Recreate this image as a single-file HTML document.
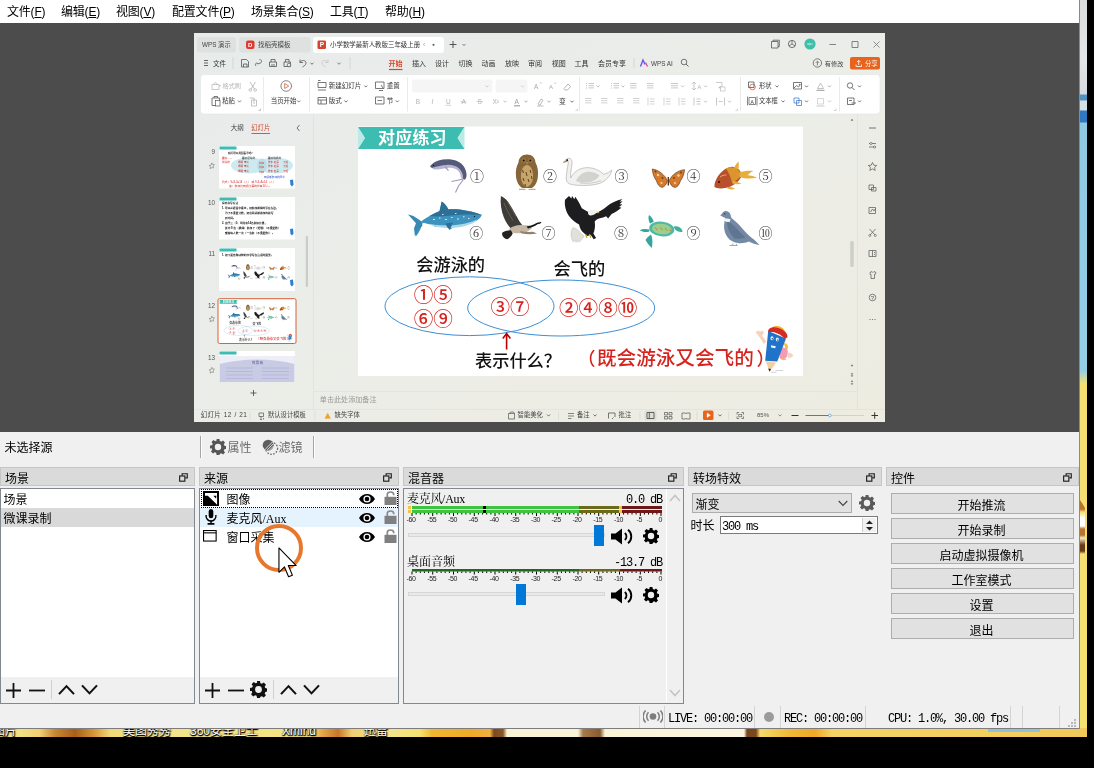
<!DOCTYPE html>
<html lang="zh-CN">
<head>
<meta charset="utf-8">
<title>OBS</title>
<style>
*{box-sizing:border-box;margin:0;padding:0}
html,body{width:1094px;height:768px;overflow:hidden;background:#000}
body{position:relative;font-family:"Liberation Sans","Noto Sans CJK SC",sans-serif;font-size:12px;color:#000;line-height:1}
.abs{position:absolute}
.wl{top:723.5px;font-size:12px;line-height:14px;color:#fff;white-space:nowrap;text-shadow:1px 1px 1px #000,0 0 2px #000,0 1px 1px #000}
#wall{position:absolute;left:0;top:0;width:1087px;height:737px;background:#f3da6e;overflow:hidden}
#obs{position:absolute;left:0;top:0;width:1080px;height:729px;background:#f0f0f0;overflow:hidden;will-change:transform}
#menubar{position:absolute;left:0;top:0;width:1079px;height:23px;background:#fff}
#menubar span{position:absolute;top:5px;font-size:12px;line-height:14px;white-space:nowrap;letter-spacing:-0.2px}
#menubar u{text-decoration:underline;text-underline-offset:1px}
#preview{position:absolute;left:0;top:23px;width:1079px;height:409px;background:#4c4c4c}
.dock-title{position:absolute;top:467px;height:19px;background:#dbdada;border:1px solid #c6c6c6;font-size:12px;line-height:16px;padding-left:4px;padding-top:2.5px}
.dock-title i{position:absolute;right:6px;top:4px;width:9px;height:9px}
.list{position:absolute;top:488px;height:215.5px;background:#fff;border:1px solid #828790}
.sans{font-family:"Liberation Sans","Noto Sans CJK SC",sans-serif}
.serif{font-family:"Liberation Serif","Noto Serif CJK SC",serif}
.mono{font-family:"Liberation Mono",monospace;font-size:12px;line-height:14px;letter-spacing:-1.2px;white-space:pre}
.btn{position:absolute;left:891px;width:183px;height:21px;background:#e1e1e1;border:1px solid #adadad;text-align:center;font-size:12px;line-height:19px;padding-top:2.5px;padding-right:2px}
</style>
</head>
<body>
<div id="wall">
  <div class="abs" style="left:1079px;top:0;width:8px;height:737px;background:linear-gradient(180deg,#d9dde0 0,#e3e6e6 60px,#d5dade 94px,#4f93c4 95px,#4f93c4 100px,#d3dfe3 101px,#d3dfe3 110px,#2f79c2 111px,#2f79c2 122px,#8fc9e3 123px,#93cde6 370px,#f5e172 384px,#f5e070 737px)"></div>
  <div class="abs" style="left:1079px;top:498px;width:6px;height:56px;background:linear-gradient(180deg,#f5e070 0,#b9742c 4px,#b9742c 11px,#f5e070 14px,#fff 20px,#fff 28px,#b9742c 31px,#b9742c 37px,#f6ecc0 40px,#6a3a18 47px,#6a3a18 53px,#f5e070 56px);clip-path:polygon(0 0,100% 10px,100% 100%,0 100%)"></div>
  <div class="abs" style="left:0;top:728px;width:1087px;height:9px;background:linear-gradient(90deg,#f3df84 0,#f3df84 20px,#f1cf72 40px,#c98632 55px,#a85e1c 75px,#d89a3c 95px,#f2d878 110px,#f5e58a 180px,#f5e380 310px,#e7a848 322px,#c9762a 338px,#f0d070 352px,#f5e58a 392px,#f5e070 420px,#f2b632 432px,#f0aa28 470px,#f0b040 490px,#7a4a20 494px,#8a5626 503px,#faf3d6 507px,#faf3d6 578px,#a87a4a 583px,#8a5a30 600px,#faf3d6 605px,#fbf6e0 744px,#7a461c 747px,#7a461c 756px,#f5da6a 760px,#f2b838 790px,#f0a828 815px,#f4d465 832px,#f3cf60 985px,#f2c85a 1087px)"></div>
  <div class="abs" style="left:988px;top:729px;width:52px;height:3px;background:#8fc0dc"></div>
  <div class="abs wl" style="left:-7px">图片</div>
  <div class="abs wl" style="left:123px">美图秀秀</div>
  <div class="abs wl" style="left:190px">360安全卫士</div>
  <div class="abs wl" style="left:282px">Xmind</div>
  <div class="abs wl" style="left:364px">迅雷</div>
</div>
<div id="obs">
  <div id="menubar">
    <span style="left:7px">文件(<u>F</u>)</span>
    <span style="left:61px">编辑(<u>E</u>)</span>
    <span style="left:116px">视图(<u>V</u>)</span>
    <span style="left:172px">配置文件(<u>P</u>)</span>
    <span style="left:251px">场景集合(<u>S</u>)</span>
    <span style="left:330px">工具(<u>T</u>)</span>
    <span style="left:385px">帮助(<u>H</u>)</span>
  </div>
  <div id="preview"></div>
  <svg class="abs" style="left:0;top:0;filter:blur(.5px)" width="1079" height="728" viewBox="0 0 1079 728" font-family="Liberation Sans, Noto Sans CJK SC, sans-serif">
<defs><linearGradient id="wbg" x1="0" y1="0" x2="1" y2="1"><stop offset="0" stop-color="#e7ebeb"/><stop offset="0.5" stop-color="#ebede8"/><stop offset="1" stop-color="#eeece1"/></linearGradient><clipPath id="cthumb"><rect x="194" y="120" width="119" height="262"/></clipPath></defs>
<rect x="194" y="33" width="691" height="389" fill="url(#wbg)" rx="0" />
<rect x="197" y="37" width="39" height="15.5" fill="#dde1df" rx="3" />
<text x="202" y="47.3" font-size="6.3" fill="#444" text-anchor="start" font-weight="normal" >WPS 演示</text>
<rect x="239" y="37" width="71.5" height="15.5" fill="#dde1df" rx="3" />
<rect x="246" y="40.5" width="8.5" height="8.5" fill="#e03a2e" rx="2" />
<text x="250.2" y="47.2" font-size="6" fill="#fff" text-anchor="middle" font-weight="bold" >D</text>
<text x="258" y="47.3" font-size="6.5" fill="#444" text-anchor="start" font-weight="normal" >找稻壳模板</text>
<rect x="313" y="37" width="131" height="16" fill="#ffffff" rx="3" />
<rect x="317.5" y="40.5" width="8.5" height="8.5" fill="#d8432e" rx="1.2" />
<text x="321.8" y="47.3" font-size="6.5" fill="#fff" text-anchor="middle" font-weight="bold" >P</text>
<text x="330" y="47.4" font-size="6.45" fill="#333" text-anchor="start" font-weight="normal" >小学数学最新人教版三年级上册</text>
<text x="423" y="47.3" font-size="6.5" fill="#999" text-anchor="start" font-weight="normal" >‹</text>
<circle cx="433.5" cy="44.8" r="1.1" fill="#666"/>
<path d="M449.5 44.5h7M453 41v7" stroke="#444" stroke-width="0.9" fill="none" />
<path d="M462.5 44L464 45.599999999999994L465.5 44" stroke="#666" stroke-width="0.8" fill="none"/>
<path d="M771.5 41.5h6.5v6.5h-6.5zM773 41.5v-1.3h6.3v6.3h-1.3" stroke="#555" stroke-width="0.8" fill="none" />
<circle cx="792" cy="44" r="3.6" fill="none" stroke="#555" stroke-width="0.8"/>
<path d="M792 40.5v3.5l-3 1.8M792 44l3 1.8" stroke="#555" stroke-width="0.7" fill="none" />
<circle cx="810" cy="44" r="5.6" fill="#3dbfa8"/>
<text x="810" y="45.2" font-size="3" fill="#e8fff8" text-anchor="middle" font-weight="normal" >wps</text>
<path d="M829.5 44.5L836 44.5" stroke="#666" stroke-width="0.8" fill="none" />
<path d="M852 41.5h6v6h-6z" stroke="#666" stroke-width="0.8" fill="none" />
<path d="M873.5 41.5l6 6M879.5 41.5l-6 6" stroke="#777" stroke-width="0.8" fill="none" />
<path d="M204 60.5h4M204 63h4M204 65.5h4" stroke="#444" stroke-width="0.8" fill="none" />
<text x="213" y="65.5" font-size="6.5" fill="#333" text-anchor="start" font-weight="normal" >文件</text>
<path d="M233 57L233 69" stroke="#cfd3d0" stroke-width="0.8" fill="none" />
<path d="M241.5 59.5h5l2 2v5.5h-7zM243.5 67v-3h3.5v3" stroke="#555" stroke-width="0.8" fill="none" />
<path d="M256 66c-1.5-2 0-3.5 2-2.5M259.5 59.5c2 0 3 2.5 1 3.5l-3 1" stroke="#555" stroke-width="0.8" fill="none" />
<path d="M269.5 62h7v4.5h-7zM271 62v-2.5h4v2.5M271 65h4" stroke="#555" stroke-width="0.8" fill="none" />
<path d="M284 62h6.5v4.5H284zM285.5 62v-2.5h3.5v2.5" stroke="#555" stroke-width="0.8" fill="none" />
<circle cx="289" cy="65" r="1.8" fill="#e8ecea" stroke="#555" stroke-width="0.7"/>
<path d="M300 62.5c1.5-3 6-2.5 6 .5 0 2-2 3-3.5 4M300 59.5v3h3" stroke="#555" stroke-width="0.8" fill="none" />
<path d="M310.5 62.7L312 64.3L313.5 62.7" stroke="#555" stroke-width="0.8" fill="none"/>
<path d="M328 62.5c-1.5-3-6-2.5-6 .5 0 2 2 3 3.5 4M328 59.5v3h-3" stroke="#c4c8c5" stroke-width="0.8" fill="none" />
<path d="M337.5 62.7L339 64.3L340.5 62.7" stroke="#666" stroke-width="0.8" fill="none"/>
<path d="M350 57L350 69" stroke="#cfd3d0" stroke-width="0.8" fill="none" />
<text x="388.5" y="65.8" font-size="7" fill="#d5482a" text-anchor="start" font-weight="bold" >开始</text>
<text x="412" y="65.8" font-size="7" fill="#333" text-anchor="start" font-weight="normal" >插入</text>
<text x="435" y="65.8" font-size="7" fill="#333" text-anchor="start" font-weight="normal" >设计</text>
<text x="458.5" y="65.8" font-size="7" fill="#333" text-anchor="start" font-weight="normal" >切换</text>
<text x="481.5" y="65.8" font-size="7" fill="#333" text-anchor="start" font-weight="normal" >动画</text>
<text x="505" y="65.8" font-size="7" fill="#333" text-anchor="start" font-weight="normal" >放映</text>
<text x="528" y="65.8" font-size="7" fill="#333" text-anchor="start" font-weight="normal" >审阅</text>
<text x="551.8" y="65.8" font-size="7" fill="#333" text-anchor="start" font-weight="normal" >视图</text>
<text x="574.5" y="65.8" font-size="7" fill="#333" text-anchor="start" font-weight="normal" >工具</text>
<text x="598" y="65.8" font-size="7" fill="#333" text-anchor="start" font-weight="normal" >会员专享</text>
<path d="M389 69.5L402.5 69.5" stroke="#d5482a" stroke-width="1.2" fill="none" />
<path d="M634 58L634 68" stroke="#cfd3d0" stroke-width="0.8" fill="none" />
<path d="M640.5 66.5l2.5-6.5 2 4.5" stroke="#6a4de8" stroke-width="1.3" fill="none" />
<path d="M645.5 62.5l2 4" stroke="#e8408a" stroke-width="1.3" fill="none" />
<text x="651" y="65.6" font-size="6.3" fill="#444" text-anchor="start" font-weight="normal" >WPS AI</text>
<circle cx="684" cy="62" r="2.8" fill="none" stroke="#555" stroke-width="0.8"/>
<path d="M686 64L688.5 66.5" stroke="#555" stroke-width="0.9" fill="none" />
<circle cx="817.4" cy="63" r="4.2" fill="none" stroke="#555" stroke-width="0.75"/>
<path d="M817.4 65.5v-4M815.8 62.8l1.6-1.6 1.6 1.6" stroke="#555" stroke-width="0.7" fill="none" />
<text x="824.8" y="65.5" font-size="6.2" fill="#444" text-anchor="start" font-weight="normal" >有修改</text>
<rect x="850" y="57" width="30" height="12.5" fill="#e8631c" rx="2" />
<path d="M856 64.5v2h5.5v-2M858.7 65v-4.5M857 62l1.7-1.7 1.7 1.7" stroke="#fff" stroke-width="0.8" fill="none" />
<text x="865" y="65.6" font-size="6.3" fill="#fff" text-anchor="start" font-weight="normal" >分享</text>
<rect x="200.5" y="74.5" width="679.5" height="39.5" fill="#ffffff" rx="3.5" stroke="#e1e4e1" stroke-width="0.6"/>
<path d="M212 84.5h7v5h-7zM214 84.5c0-2.5 3-2.5 3 0M219 86.5l2-1.5" stroke="#b9bdb9" stroke-width="0.8" fill="none" />
<text x="222.5" y="88.4" font-size="6.2" fill="#b4b8b4" text-anchor="start" font-weight="normal" >格式刷</text>
<path d="M250 82l4.5 7M255.5 82l-4.5 7" stroke="#a9ada9" stroke-width="0.8" fill="none" />
<circle cx="250.3" cy="90" r="1.3" fill="none" stroke="#a9ada9" stroke-width="0.7"/><circle cx="255.2" cy="90" r="1.3" fill="none" stroke="#a9ada9" stroke-width="0.7"/>
<path d="M212 98h7.5v7.5H212zM214 98v-1.5h3.5v1.5" stroke="#555" stroke-width="0.8" fill="none" />
<rect x="215.5" y="100.5" width="4.5" height="5.5" fill="#fff" rx="0" stroke="#555" stroke-width="0.7"/>
<text x="222.3" y="103.4" font-size="6.3" fill="#333" text-anchor="start" font-weight="normal" >粘贴</text>
<path d="M238 100.5L239.5 102.1L241 100.5" stroke="#555" stroke-width="0.8" fill="none"/>
<path d="M249.5 98h4.5v6M251.5 100h5v6h-5z" stroke="#b0b4b0" stroke-width="0.8" fill="none" />
<path d="M258.5 110.5h2v-2" stroke="#999" stroke-width="0.6" fill="none" />
<path d="M263.5 77L263.5 111.5" stroke="#e3e6e3" stroke-width="0.8" fill="none" />
<circle cx="286.2" cy="86" r="5.3" fill="none" stroke="#666" stroke-width="0.8"/>
<path d="M284.7 83.5v5l4-2.5z" stroke="#d5603a" stroke-width="0.8" fill="none" />
<text x="270.8" y="103.4" font-size="6.4" fill="#333" text-anchor="start" font-weight="normal" >当页开始</text>
<path d="M297.2 100.5L298.7 102.1L300.2 100.5" stroke="#555" stroke-width="0.8" fill="none"/>
<path d="M309.5 77L309.5 111.5" stroke="#e3e6e3" stroke-width="0.8" fill="none" />
<path d="M318 82.5h8v5h-8zM318 90h8M318 80.5h2.5" stroke="#555" stroke-width="0.8" fill="none" />
<text x="328.7" y="88.4" font-size="6.5" fill="#333" text-anchor="start" font-weight="normal" >新建幻灯片</text>
<path d="M364.3 85.5L365.8 87.1L367.3 85.5" stroke="#555" stroke-width="0.8" fill="none"/>
<path d="M318 97.5h8.5v6.5H318zM318 100h8.5M321 100v4" stroke="#555" stroke-width="0.8" fill="none" />
<text x="328.7" y="103.4" font-size="6.5" fill="#333" text-anchor="start" font-weight="normal" >版式</text>
<path d="M344.5 100.5L346 102.1L347.5 100.5" stroke="#555" stroke-width="0.8" fill="none"/>
<path d="M375.5 82h8.5v6.5h-8.5zM379 90.5h4M381 85l2 3" stroke="#555" stroke-width="0.8" fill="none" />
<text x="386.8" y="88.4" font-size="6.5" fill="#333" text-anchor="start" font-weight="normal" >重置</text>
<path d="M375.5 97h8.5v7h-8.5zM377.5 100.5h4.5" stroke="#555" stroke-width="0.8" fill="none" />
<text x="386.8" y="103.4" font-size="6.5" fill="#333" text-anchor="start" font-weight="normal" >节</text>
<path d="M395.8 100.5L397.3 102.1L398.8 100.5" stroke="#555" stroke-width="0.8" fill="none"/>
<path d="M407.5 77L407.5 111.5" stroke="#e3e6e3" stroke-width="0.8" fill="none" />
<rect x="412" y="79.5" width="80.5" height="13" fill="#f4f5f4" rx="2" />
<rect x="495.5" y="79.5" width="32" height="13" fill="#f4f5f4" rx="2" />
<path d="M485.5 85.5L487 87.1L488.5 85.5" stroke="#c5c8c5" stroke-width="0.8" fill="none"/>
<path d="M521 85.5L522.5 87.1L524 85.5" stroke="#c5c8c5" stroke-width="0.8" fill="none"/>
<text x="534" y="88.5" font-size="6.5" fill="#aaa" text-anchor="start" font-weight="normal" >A</text>
<path d="M539.5 83.5l1.2-1.2 1.2 1.2" stroke="#aaa" stroke-width="0.6" fill="none" />
<text x="549" y="88.5" font-size="6" fill="#aaa" text-anchor="start" font-weight="normal" >A</text>
<path d="M554 82.5l1.2 1.2 1.2-1.2" stroke="#aaa" stroke-width="0.6" fill="none" />
<path d="M564 88.5l4-4.5 2.5 2.5-3 3.5h-2.5z" stroke="#999" stroke-width="0.7" fill="none" />
<text x="415.8" y="104" font-size="6.5" fill="#b0b3b0" text-anchor="start" font-weight="normal" >B</text>
<text x="431.5" y="104" font-size="6.5" fill="#b0b3b0" text-anchor="start" font-weight="normal" font-style="italic">I</text>
<text x="446" y="104" font-size="6.5" fill="#b0b3b0" text-anchor="start" font-weight="normal" >U</text>
<text x="461.5" y="104" font-size="6.5" fill="#b0b3b0" text-anchor="start" font-weight="normal" >A</text>
<text x="477.5" y="104" font-size="6.5" fill="#b0b3b0" text-anchor="start" font-weight="normal" >S</text>
<text x="492.5" y="104" font-size="6.5" fill="#b0b3b0" text-anchor="start" font-weight="normal" >X²</text>
<path d="M445.5 105.3L451 105.3" stroke="#b0b3b0" stroke-width="0.6" fill="none" />
<path d="M460.5 101.8L466.5 101.8" stroke="#b0b3b0" stroke-width="0.6" fill="none" />
<path d="M476.5 101.5L483 101.5" stroke="#b0b3b0" stroke-width="0.6" fill="none" />
<path d="M503.5 100.7L505 102.3L506.5 100.7" stroke="#b0b3b0" stroke-width="0.8" fill="none"/>
<text x="514.5" y="103.8" font-size="6.5" fill="#999" text-anchor="start" font-weight="normal" >A</text>
<path d="M514 105.8L520 105.8" stroke="#999" stroke-width="1.1" fill="none" />
<path d="M524.5 100.7L526 102.3L527.5 100.7" stroke="#999" stroke-width="0.8" fill="none"/>
<path d="M538 104l3-5 2 1.2-3 5zM537 106h6.5" stroke="#aaa" stroke-width="0.8" fill="none" />
<path d="M547.5 100.7L549 102.3L550.5 100.7" stroke="#999" stroke-width="0.8" fill="none"/>
<text x="559" y="104.2" font-size="6.8" fill="#333" text-anchor="start" font-weight="normal" >变</text>
<path d="M570.5 100.7L572 102.3L573.5 100.7" stroke="#555" stroke-width="0.8" fill="none"/>
<path d="M579.5 77L579.5 111.5" stroke="#e3e6e3" stroke-width="0.8" fill="none" />
<path d="M588.5 83.5L594 83.5" stroke="#b0b3b0" stroke-width="0.7" fill="none" />
<path d="M588.5 85.7L594 85.7" stroke="#b0b3b0" stroke-width="0.7" fill="none" />
<path d="M588.5 87.9L594 87.9" stroke="#b0b3b0" stroke-width="0.7" fill="none" />
<circle cx="586.5" cy="83.5" r="0.5" fill="#b0b3b0"/>
<circle cx="586.5" cy="85.7" r="0.5" fill="#b0b3b0"/>
<circle cx="586.5" cy="87.9" r="0.5" fill="#b0b3b0"/>
<path d="M596.5 85.5L598 87.1L599.5 85.5" stroke="#b0b3b0" stroke-width="0.8" fill="none"/>
<path d="M613.5 83.5L619 83.5" stroke="#b0b3b0" stroke-width="0.7" fill="none" />
<path d="M613.5 85.7L619 85.7" stroke="#b0b3b0" stroke-width="0.7" fill="none" />
<path d="M613.5 87.9L619 87.9" stroke="#b0b3b0" stroke-width="0.7" fill="none" />
<circle cx="611.5" cy="83.5" r="0.5" fill="#b0b3b0"/>
<circle cx="611.5" cy="85.7" r="0.5" fill="#b0b3b0"/>
<circle cx="611.5" cy="87.9" r="0.5" fill="#b0b3b0"/>
<path d="M621.5 85.5L623 87.1L624.5 85.5" stroke="#b0b3b0" stroke-width="0.8" fill="none"/>
<path d="M630 83.5L636.5 83.5" stroke="#b5b8b5" stroke-width="0.7" fill="none" />
<path d="M630 85.7L636.5 85.7" stroke="#b5b8b5" stroke-width="0.7" fill="none" />
<path d="M630 87.9L636.5 87.9" stroke="#b5b8b5" stroke-width="0.7" fill="none" />
<path d="M647 83.5L653.5 83.5" stroke="#b5b8b5" stroke-width="0.7" fill="none" />
<path d="M647 85.7L653.5 85.7" stroke="#b5b8b5" stroke-width="0.7" fill="none" />
<path d="M647 87.9L653.5 87.9" stroke="#b5b8b5" stroke-width="0.7" fill="none" />
<path d="M671 83.5L678 83.5" stroke="#b0b3b0" stroke-width="0.7" fill="none" />
<path d="M671 85.7L678 85.7" stroke="#b0b3b0" stroke-width="0.7" fill="none" />
<path d="M671 87.9L678 87.9" stroke="#b0b3b0" stroke-width="0.7" fill="none" />
<path d="M681 85.5L682.5 87.1L684 85.5" stroke="#b0b3b0" stroke-width="0.8" fill="none"/>
<path d="M694 82v8M692 88l2 2 2-2M692 84l2-2 2 2" stroke="#b0b3b0" stroke-width="0.7" fill="none" />
<text x="697.5" y="88.5" font-size="5.5" fill="#b0b3b0" text-anchor="start" font-weight="normal" >A</text>
<path d="M704 85.5L705.5 87.1L707 85.5" stroke="#b0b3b0" stroke-width="0.8" fill="none"/>
<path d="M716 82.5h6v5h-3.5M721 89l-2-1.5 2-1.5" stroke="#b5b8b5" stroke-width="0.7" fill="none" />
<rect x="720.5" y="87" width="4.5" height="4" fill="#fff" rx="0" stroke="#b5b8b5" stroke-width="0.6"/>
<path d="M585 98.5L591.5 98.5" stroke="#bfc2bf" stroke-width="0.7" fill="none" />
<path d="M585 100.7L591.5 100.7" stroke="#bfc2bf" stroke-width="0.7" fill="none" />
<path d="M585 102.9L591.5 102.9" stroke="#bfc2bf" stroke-width="0.7" fill="none" />
<path d="M601 98.5L607.5 98.5" stroke="#bfc2bf" stroke-width="0.7" fill="none" />
<path d="M601 100.7L607.5 100.7" stroke="#bfc2bf" stroke-width="0.7" fill="none" />
<path d="M601 102.9L607.5 102.9" stroke="#bfc2bf" stroke-width="0.7" fill="none" />
<path d="M617 98.5L623.5 98.5" stroke="#bfc2bf" stroke-width="0.7" fill="none" />
<path d="M617 100.7L623.5 100.7" stroke="#bfc2bf" stroke-width="0.7" fill="none" />
<path d="M617 102.9L623.5 102.9" stroke="#bfc2bf" stroke-width="0.7" fill="none" />
<path d="M633 98.5L639.5 98.5" stroke="#bfc2bf" stroke-width="0.7" fill="none" />
<path d="M633 100.7L639.5 100.7" stroke="#bfc2bf" stroke-width="0.7" fill="none" />
<path d="M633 102.9L639.5 102.9" stroke="#bfc2bf" stroke-width="0.7" fill="none" />
<path d="M648 97.5v8M650 99h4.5M650 101.5h4.5M650 104h4.5" stroke="#bfc2bf" stroke-width="0.7" fill="none" />
<path d="M664 97.5v8M666 99h4.5M666 101.5h4.5M666 104h4.5" stroke="#bfc2bf" stroke-width="0.7" fill="none" />
<path d="M679 97.5v8M681 99h4.5M681 101.5h4.5M681 104h4.5" stroke="#bfc2bf" stroke-width="0.7" fill="none" />
<path d="M694 97.5v8M696.5 99h4M696.5 101.5h4M696.5 104h4" stroke="#b0b3b0" stroke-width="0.7" fill="none" />
<path d="M704 100.7L705.5 102.3L707 100.7" stroke="#b0b3b0" stroke-width="0.8" fill="none"/>
<path d="M716.5 97.5v8M724.5 97.5v8M718.5 101.5h4" stroke="#b0b3b0" stroke-width="0.7" fill="none" />
<path d="M728 100.7L729.5 102.3L731 100.7" stroke="#b0b3b0" stroke-width="0.8" fill="none"/>
<path d="M575.5 110.5h2v-2" stroke="#aaa" stroke-width="0.5" fill="none" />
<path d="M735.5 110.5h2v-2" stroke="#aaa" stroke-width="0.5" fill="none" />
<path d="M740.5 77L740.5 111.5" stroke="#e3e6e3" stroke-width="0.8" fill="none" />
<circle cx="752.5" cy="87" r="2.8" fill="none" stroke="#d5603a" stroke-width="0.8"/>
<path d="M748.5 82h5.5v5.5h-5.5z" stroke="#555" stroke-width="0.8" fill="none" />
<text x="759" y="88.4" font-size="6.3" fill="#333" text-anchor="start" font-weight="normal" >形状</text>
<path d="M775.5 85.5L777 87.1L778.5 85.5" stroke="#555" stroke-width="0.8" fill="none"/>
<path d="M749 97.5h6.5v7H749zM747.5 96.5v9M757 96.5v9" stroke="#555" stroke-width="0.7" fill="none" />
<text x="750.5" y="103.5" font-size="5" fill="#333" text-anchor="start" font-weight="normal" >A</text>
<text x="759" y="103.4" font-size="6.3" fill="#333" text-anchor="start" font-weight="normal" >文本框</text>
<path d="M781.5 100.5L783 102.1L784.5 100.5" stroke="#555" stroke-width="0.8" fill="none"/>
<path d="M793.5 82.5h8v6.5h-8zM794 88l2.5-2.5 2 1.5 2-2.5" stroke="#555" stroke-width="0.8" fill="none" />
<circle cx="799.5" cy="84.5" r="0.8" fill="#d5603a"/>
<path d="M805 85.5L806.5 87.1L808 85.5" stroke="#555" stroke-width="0.8" fill="none"/>
<path d="M794 98h5v5h-5zM796.5 100.5h5v5h-5z" stroke="#4a7fd5" stroke-width="0.8" fill="none" />
<path d="M805 100.5L806.5 102.1L808 100.5" stroke="#555" stroke-width="0.8" fill="none"/>
<path d="M817.5 88.5l3-5.5 3 5.5z" stroke="#aaa" stroke-width="0.7" fill="none" />
<path d="M816.5 90.3L824.5 90.3" stroke="#999" stroke-width="1" fill="none" />
<path d="M828 85.5L829.5 87.1L831 85.5" stroke="#999" stroke-width="0.8" fill="none"/>
<path d="M817.5 98.5h6v5.5h-6z" stroke="#c5c8c5" stroke-width="0.7" fill="none" />
<path d="M816.5 106L824.5 106" stroke="#c5c8c5" stroke-width="1" fill="none" />
<path d="M828 100.5L829.5 102.1L831 100.5" stroke="#bbb" stroke-width="0.8" fill="none"/>
<path d="M834 110.5h2v-2" stroke="#aaa" stroke-width="0.5" fill="none" />
<path d="M839.5 77L839.5 111.5" stroke="#e3e6e3" stroke-width="0.8" fill="none" />
<circle cx="850" cy="85.5" r="2.7" fill="none" stroke="#555" stroke-width="0.8"/>
<path d="M852 87.5L854.5 90" stroke="#555" stroke-width="0.9" fill="none" />
<path d="M858 85.5L859.5 87.1L861 85.5" stroke="#555" stroke-width="0.8" fill="none"/>
<path d="M847.5 98h6.5v6.5h-6.5zM849 100.5h3M851.5 103h4.5" stroke="#555" stroke-width="0.8" fill="none" />
<path d="M858 100.5L859.5 102.1L861 100.5" stroke="#555" stroke-width="0.8" fill="none"/>
<text x="230.8" y="130.4" font-size="6.5" fill="#444" text-anchor="start" font-weight="normal" >大纲</text>
<text x="251.3" y="130.4" font-size="6.3" fill="#d5482a" text-anchor="start" font-weight="normal" >幻灯片</text>
<path d="M251.5 133.5L270 133.5" stroke="#d5482a" stroke-width="0.9" fill="none" />
<path d="M299.5 125l-2.5 3 2.5 3" stroke="#555" stroke-width="0.8" fill="none" />
<path d="M313.5 115L313.5 409" stroke="#dde0dc" stroke-width="0.7" fill="none" />
<rect x="305.8" y="236" width="2.2" height="51" fill="#c9ccc9" rx="1" />
<g clip-path="url(#cthumb)"><g font-size="6.3" fill="#555" text-anchor="end"><text x="215" y="153.5">9</text><text x="215" y="205">10</text><text x="215" y="256">11</text><text x="215" y="308">12</text><text x="215" y="360">13</text></g><path d="M0-2.7l.8 1.7 1.9.2-1.4 1.3.4 1.9L0 2.1l-1.7 1 .4-1.9-1.4-1.3 1.9-.2z" transform="translate(211.8,165.5)" fill="none" stroke="#777" stroke-width=".6"/><path d="M0-2.7l.8 1.7 1.9.2-1.4 1.3.4 1.9L0 2.1l-1.7 1 .4-1.9-1.4-1.3 1.9-.2z" transform="translate(211.8,318.7)" fill="none" stroke="#777" stroke-width=".6"/><path d="M0-2.7l.8 1.7 1.9.2-1.4 1.3.4 1.9L0 2.1l-1.7 1 .4-1.9-1.4-1.3 1.9-.2z" transform="translate(211.8,370)" fill="none" stroke="#777" stroke-width=".6"/><rect x="219" y="146" width="76" height="42.5" fill="#fff"/><rect x="219.5" y="146.5" width="17" height="3" fill="#3dbcb2"/><ellipse cx="249" cy="165.5" rx="18" ry="8" fill="#cdeaf0"/><ellipse cx="275" cy="165.5" rx="18" ry="8" fill="#cdeaf0"/><ellipse cx="262" cy="165.5" rx="5" ry="7" fill="#b9e0e8"/><g font-family="Liberation Sans, Noto Sans CJK SC, sans-serif" font-size="2.6" fill="#d6231e"><text x="228" y="154.3" fill="#222" font-weight="bold">我们可以用图表示吗？</text><text x="222" y="158.6">喜欢……</text><text x="222" y="162.8">篮球的</text><text x="242" y="158.6" fill="#222">喜欢足球的</text><text x="268" y="158.6" fill="#222">喜欢跳绳的</text><text x="238" y="162.5">杨明 李芳</text><text x="259" y="163.5">刘红</text><text x="268" y="162.5">陈东 赵军</text><text x="283" y="162.5">丁旭</text><text x="238" y="167">杨明 李芳</text><text x="259" y="168">刘红</text><text x="268" y="167">陈东 赵军</text><text x="283" y="167">丁旭</text><text x="238" y="171.5">杨明 李芳</text><text x="259" y="172.5">刘红</text><text x="268" y="171.5">陈东 赵军</text><text x="283" y="171.5">丁旭</text><text x="264" y="178" fill="#2a4fd0">两项都参加的同学</text><text x="222" y="182.5" font-size="2.8">列式：9+8-3=14（人） 或 9-3+8=14（人）</text><text x="229" y="186.5" font-size="2.8">答：参加这两项比赛的共有14人。</text></g><path d="M290 180l3-.5.5 5-1.5 2-1.5-1.5z" fill="#2c7fd2"/><rect x="219" y="197" width="76" height="42.5" fill="#fff"/><rect x="219.5" y="197.5" width="17" height="3" fill="#3dbcb2"/><g font-family="Liberation Sans, Noto Sans CJK SC, sans-serif" font-size="2.7" fill="#111" font-weight="bold"><text x="222" y="203.5">探究书写方法</text><text x="222" y="208.6">1. 可以从题目中看出，把参加跳绳的写在左边，</text><text x="225" y="213.7">为了不重复计数，把这两项都参加的就写</text><text x="225" y="218.8">到中间。</text><text x="222" y="223.9">2. 由于三（1）班共有14名参加比赛，</text><text x="225" y="229">其中 9 名（跳绳）参加了（踢毽）（不重复数）</text><text x="225" y="234.1">或者每人数一次（一名参（不重复数））。</text></g><path d="M290 229l3-.5.5 5-1.5 2-1.5-1.5z" fill="#2c7fd2"/><rect x="219" y="248" width="76" height="43" fill="#fff"/><g transform="translate(157.858,237.896) scale(0.1708)"><path d="M430 166.2c2-2.6 5-4.6 8.5-5.8 6-1.6 13-1.6 19 .8 5 2.2 8.5 7 9 13 .2 2.2-.4 4.2-1.6 5.6l-2.4-1.2c.4-4.6-1.4-8.6-5.5-11-3.6-2-8.5-1.8-13-.8-4.5.8-9 1.8-12.6 1z" fill="#555a78"/><path d="M433 167.5c4-1 9-2.4 13.5-2.6 5-.4 9.5.8 12.5 3.6 3 2.8 4.4 6.6 3.8 10.5l-2-1c.2-3.4-1.3-6.4-4.3-8.4-3.4-2.2-8-2-12.5-1.2-4 .8-8 1.6-11.6.6z" fill="#b7b3d3"/><path d="M463.5 179l-12 2.5M463.5 179.5l-5 6.5-3 6.5M445 167l3.5 3.5" stroke="#9a98b8" stroke-width="1.1" fill="none"/><circle cx="433.5" cy="165.4" r=".7" fill="#111"/><path d="M527 154.5c5 0 8.3 3.4 8.5 8 2 3.5 3 8.5 2.4 14-.5 5.5-3 10-6 11.5h-9.5c-3.4-1.8-5.8-6-6.4-11.5-.6-5.5.4-10.5 2.5-14 .2-4.6 3.5-8 8.5-8z" fill="#866538"/><path d="M527 165c3 0 5.5 3.5 6 9.5.4 6-1.6 11-6 12.5-4.4-1.5-6.4-6.5-6-12.5.5-6 3-9.5 6-9.5z" fill="#c7a468"/><path d="M522.5 170l1 3M526 172l1 4M530 170l1 3M523 178l1 3M528 179l1 3M531.5 176l.5 3M525 184l.5 2" stroke="#5e4220" stroke-width="1"/><circle cx="523.7" cy="160.6" r="2.3" fill="#9a7a48"/><circle cx="530.3" cy="160.6" r="2.3" fill="#9a7a48"/><circle cx="523.7" cy="160.6" r="1" fill="#1a1208"/><circle cx="530.3" cy="160.6" r="1" fill="#1a1208"/><path d="M526.3 162.5l.7 1.8.7-1.8z" fill="#d9c48a"/><path d="M519 189.3h6.5M528.5 189.3h7" stroke="#c9ae78" stroke-width="1.3"/><path d="M563 162.5l3-2.8c.8-1.4 2.6-1.9 4-1.2 1.7.9 2.4 3 2 5.5-.8 4.5-1.7 9.5-1.3 14 1.7-3.5 4.5-6.5 8.3-8.5 4-2 9-2.3 13.3-1.3 4.3 1 8.3 3 11 6 2.5-.3 5.8-1.8 8.5-4.2-.8 4.5-3.8 8.8-8.8 11.8-4.2 2.4-10 3.4-17 3.6-6.5.2-13-.2-16.5-1.6-2.4-1-3.3-3-3.3-5.8.1-4.5 1.2-9.5 1.9-13.8.3-1.8.2-3-.8-3.2z" fill="#f1f1ef" stroke="#b0b0ae" stroke-width=".7"/><path d="M576 181c1.5-4 5-7.5 9.5-8.8 5-1.3 10.5.2 14 3.3-2 3.5-6.5 6-12 6.8-4 .6-8.5.2-11.5-1.3z" fill="#d2d2d0"/><path d="M580 183c7 .8 15 .2 21-2.5" stroke="#c2c2c0" stroke-width=".8" fill="none"/><path d="M562.8 162.8l3.4-2.6.6 1.8z" fill="#d97a28"/><path d="M566 159.7l1.8-.6.4 1.7-1.4.6z" fill="#222"/><path d="M667.3 180.5c-2.5-5.5-8.5-10.5-15-11.5.3 4.5 1.8 8.5 4 11.5.5 1 .8 2.2 1.3 3.2 1.2 2.2 3 3.6 4.5 3.6 2.5-.3 4.6-3.3 5.2-6.8z" fill="#d67a2c" stroke="#6e3a18" stroke-width=".7"/><path d="M669.3 180.5c2.5-5.5 8.5-10.3 15.2-10.8-.3 4.3-1.8 8-4 11-.5 1-.8 2.2-1.3 3.2-1.2 2.2-3 3.6-4.7 3.4-2.5-.3-4.6-3.3-5.2-6.8z" fill="#d67a2c" stroke="#6e3a18" stroke-width=".7"/><circle cx="658" cy="175" r="1.2" fill="#f3d9a6"/><circle cx="678.5" cy="175.5" r="1.2" fill="#f3d9a6"/><circle cx="661.5" cy="183" r="1" fill="#f3d9a6"/><circle cx="675" cy="183" r="1" fill="#f3d9a6"/><circle cx="655.5" cy="171.5" r=".9" fill="#6e3a18"/><circle cx="681" cy="172.5" r=".9" fill="#6e3a18"/><circle cx="662.5" cy="178" r=".9" fill="#6e3a18"/><circle cx="674" cy="178" r=".9" fill="#6e3a18"/><path d="M668.3 177v8.5" stroke="#4a2a10" stroke-width="1.3"/><path d="M714.3 186.5c.2-4.5 2.4-9.5 6-13.3 3-3.3 6.6-5.8 10.5-6.3 3.8-.4 7.3 1.4 9.5 4.3 1.4 2 1.7 4 .7 6-1.7 3.5-5 6.5-9 8.5-3.5 1.7-7.5 2.7-11.5 2.7-2.7 0-5-.5-6.2-1.9z" fill="#b8502c"/><path d="M726 168.5c3-1.6 6.5-1.6 9.5-.2 3 1.5 5.3 4 5.8 7-2 3.3-5.5 5.8-9.3 7.3-1-4.5-3-9.5-6-14.1z" fill="#dc952e"/><path d="M734 168c1-2.5 2.5-4.8 4.5-6.6.5 2.5.5 5.5-.2 8.2zM739.5 172.5c4.5-1.7 9.5-2.2 14-1.5-2.3 1-4.3 2.5-5.8 4.3 3.3.2 6.5 1 9.3 2.3-5.5 1.4-12 1.2-17.5-.6zM728 187c2.5-.4 5 .2 7 1.8-2.5.8-5.5.8-7.8-.2zM733 181c3 .3 6 1.3 8.5 2.8-3.2.8-6.5.6-9.5-.5z" fill="#e6ae3c"/><circle cx="719" cy="182" r="1.1" fill="#2a1408"/><path d="M720 177c1.8-1.3 4-2 6.3-2" stroke="#e0b060" stroke-width="1" fill="none"/><path d="M408 214.4c4 2 7.6 5 11 8.5 3.3-2.6 6.8-5 10.5-7 3.2-1.8 6.6-3.5 10-4.8l2.2-9.6c3 2 5.2 4.6 6.6 7.8 4-.3 8-.2 12 .3 7.5 1 15 2.8 21.6 5.4-1.3 2.8-3.8 5-7 6.6-5.5 2.7-12 3.8-18.8 4.2l-6.4 4-.5-3.7c-4 .3-8.2 0-12.4-.6l-1.8 1.8-1-2.2c-4-.7-8-1.5-11.3-2.3-1.4 5-3.5 9.5-6.6 13.5-.8-5.5-.3-10.5 1-15-2.6-2-5.6-4.3-9.1-6.9z" fill="#3d93bd"/><path d="M429.5 216c3.2-1.8 6.6-3.5 10-4.8l2.2-9.6c3 2 5.2 4.6 6.6 7.8 4-.3 8-.2 12 .3 7.5 1 15 2.8 21.6 5.4-7-.6-14.5-1-21.5-.4-10.5.8-21 2.5-30.9 1.3z" fill="#2d6f96"/><path d="M428 224c10 1.5 21 1.8 31.5.4 6.5-.9 12.5-2.5 17.5-5-1.4 2-3.5 3.5-6 4.7-5.5 2.5-12 3.4-18.8 3.8-8.4.4-17-.8-24.2-3.9z" fill="#a9d6e8"/><path d="M408 214.4l5.5 1.6 7.5 5 1.5 4.5-4.5 4.5-3 6.8-1-8.5 2-5z" fill="#3689b3"/><path d="M453 222.5l-3.3 7.6-2.7-3.3-1.5-3.3z" fill="#2d6f96"/><path d="M433 219.5h2M439 218h1.5M445 219.5h2M451 217.5h1.5M457 219h2M463 216.8h1.5M468 218.5h1.5M442 214.5h1.5M455 213.5h1.5" stroke="#e6f4fa" stroke-width=".9"/><circle cx="474.5" cy="216.5" r=".8" fill="#0f222c"/><path d="M500.9 196c2.5 1 5 3 7 5.8 3.5 5 6.5 10.5 9.5 16 1.6 3 3.3 5.6 5.2 7.6l-11.5 3.3c-3-3-5.5-7-7.3-11.5-2.5-6.5-3.8-14-2.9-21.2z" fill="#3f3b36"/><path d="M504 203c2.5 6 5.5 12 9 17.5M507 201c3 5.5 6 11 9.5 16" stroke="#6a655c" stroke-width=".8" fill="none"/><path d="M509.5 228.5c3.5-2.6 8-3.8 12.5-3.5 3 .2 5.5.7 7.5.5l2.5 2.5c-2 2.5-5.5 4.3-9.5 5-4.5.8-9.5.3-13.5-1.5z" fill="#c5b7a3"/><path d="M520 231c4 .8 8.5 1.2 13 .8l4 1.7c-5 1-11 .8-16-.2z" fill="#8e8273"/><path d="M526.5 226.5c3.5-.5 7-1.7 10-3.5l3.3-1.2 1.7.7-1.5 1.3-2.5.5c-2.8 2-6 3.5-9.5 4.2z" fill="#1c1a18"/><path d="M538.5 222.3l1.3-.3" stroke="#eee" stroke-width=".8"/><path d="M502.4 232.5c2.5-1.5 5.5-2.3 8.5-2.3l1.8 3.3c-1 2.5-3 4.5-5.5 5.8-2.5-.5-4.3-2-5-4.3-.2-.9-.1-1.7.2-2.5z" fill="#24211e"/><path d="M569 196l2.5 2.5.5-2.7 2.3 3.5 1-2.5c2.5 3.5 4.7 7.5 6.5 11.5l6 3.5c3.5-.8 6.5-.6 9.3.7 3.5-1.5 6.5-3.5 9.3-5.8 4.7-3.8 10-6.3 15.9-7.7l-2.6 2.7 2.9-.4-3 2.9 2.8.2-3.3 2.6 2.3.7c-3 2.6-6.3 4.7-9.8 6.2l-3.5 4.6-2-2.2c-2 .9-4.2 1.6-6.2 2-2.3.6-4.2 1.7-5.2 3.3.7 4.3.2 8.3-1.3 12l2.7 4.5-2.5 1.2-2.7-4.3-4 1-3-3c-2.5-2-4.2-5-4.8-8.6-3.5-1.5-6.8-4-9.3-7.3-3.7-4.8-5.6-11-4.8-17.3z" fill="#1d1d20"/><path d="M588 211.5c2.7-1.8 6.3-2.2 9-.8l2.3 1.6-3 .8c-1.6 1.6-4 2.5-6.3 2.3-1.3-.2-2-1.2-2-2.4z" fill="#f0f0ec"/><path d="M597 211.8l2.5.8-1.8 1z" fill="#dba420"/><path d="M573 227.5c2.5.7 5 2.3 6.8 4.5 1.3 1.7 2.7 3 4.2 3.8-.8 2.5-2.7 4.8-5.3 6.2l-1.3-1.8-1.2 2.2-1.5-2-1.5 1.5c-1.5-2.5-2.3-5.5-2.2-8.3.1-2.3.8-4.4 2-6.1z" fill="#e2e0da" stroke="#bcbab4" stroke-width=".5"/><path d="M585.5 234l1.5 4M589.5 234l1.3 3.8" stroke="#c9a232" stroke-width="1.1"/><path d="M650 223.5c-1.5-2.7-2-5.8-1-8.5 2.3 1.5 4 4 4.8 6.8zM649.5 229.5c-3.3-1-7-.8-9.8.7 2.7 1.8 6.5 2.2 9.6 1.2zM651 234.5c-2 1.5-4.5 3.5-5.5 5.5 1.8 3.3 4 6 6.3 8 .8-3.5.8-7 .2-10.5z" fill="#36a69c"/><ellipse cx="661.8" cy="229" rx="12.6" ry="7.4" transform="rotate(6 661.8 229)" fill="#4fb7a6"/><ellipse cx="661.8" cy="229" rx="9.8" ry="5.2" transform="rotate(6 661.8 229)" fill="#9ccf8e"/><path d="M655 227.5l2.5 2.5M660 227l2.5 3M665 228l2.5 3M669.5 229.5l1.5 2" stroke="#d08a48" stroke-width="1.1"/><path d="M673.5 226.8c2.5-1 5.5-.3 7.5 1.7 1 1 1.5 2.2 1.5 3.3-2.3.8-5-.2-7-1.7z" fill="#46ac9c"/><path d="M720.2 215.2l2-1.6c.6-1.7 2.3-2.8 4-2.6 2.2.2 3.8 1.7 4.3 3.7.3 1.2.5 2.3 1 3.3 4 3 7.7 6.7 11 10.7 3.5 4.2 7.5 8 12 11.3l5 5c-3.7-.4-7.3-1.6-10.6-3.4-3.3 1.4-7 2-10.7 1.5-4.3-.5-8-2.5-10.5-5.7-2.6-3.3-3.8-7.7-3.6-12 .1-2.5.5-5 1.3-7.3l-2.3-1.1z" fill="#7489a5"/><path d="M727 221.5c3.5 1.2 6.5 3.5 9 6.3 3 3.4 6 6.6 9.5 9.4-3.3 1.4-7 2-10.5 1.5-2.8-2.3-5-5.3-6.3-8.7-1-2.7-1.6-5.6-1.7-8.5z" fill="#5f7592"/><path d="M724 218.8c2.2-.7 4.6-.5 6.6.4l-1 2.8c-1.8.3-3.8 0-5.3-.9z" fill="#f2f4f5"/><circle cx="724.8" cy="213.8" r=".6" fill="#1a1a1a"/><path d="M733 243.5l-.5 2M736.5 243.8l-.3 1.8M729.5 245.5h8" stroke="#8a8f98" stroke-width=".8"/><g font-family="Liberation Serif, Noto Serif CJK SC, serif" font-size="14" fill="#3a3a3a"><text x="470" y="181.3">①</text><text x="543" y="181.3">②</text><text x="614.5" y="181.3">③</text><text x="686.5" y="181.3">④</text><text x="758.5" y="181.3">⑤</text><text x="469.2" y="238.3">⑥</text><text x="541.5" y="238.3">⑦</text><text x="614" y="238.3">⑧</text><text x="686.5" y="238.3">⑨</text><text x="758.5" y="238.3">⑩</text></g></g><rect x="219" y="248" width="76" height="9.5" fill="#fff"/><rect x="219.5" y="248.5" width="17" height="3" fill="#3dbcb2"/><text x="222" y="256" font-family="Liberation Sans, Noto Sans CJK SC, sans-serif" font-size="2.7" fill="#111" font-weight="bold">1. 把下面各种动物的序号写在合适的圈里。</text><path d="M290 280l3-.5.5 5-1.5 2-1.5-1.5z" fill="#2c7fd2"/><rect x="218" y="298.7" width="78" height="44.8" rx="1.5" fill="#fff" stroke="#d9603a" stroke-width="1"/><g transform="translate(158.641,278.566) scale(0.1694)"><path d="M358 127h106.5l-7 11 7 11H358l7-11z" fill="#3dbcb2"/><path d="M358 127l7 11-7 11zM464.5 127l-7 11 7 11z" fill="#8fdcd5" opacity=".6"/><text x="378" y="144.3" font-family="Liberation Sans, Noto Sans CJK SC, sans-serif" font-size="17" font-weight="bold" fill="#fff" letter-spacing=".2">对应练习</text><path d="M430 166.2c2-2.6 5-4.6 8.5-5.8 6-1.6 13-1.6 19 .8 5 2.2 8.5 7 9 13 .2 2.2-.4 4.2-1.6 5.6l-2.4-1.2c.4-4.6-1.4-8.6-5.5-11-3.6-2-8.5-1.8-13-.8-4.5.8-9 1.8-12.6 1z" fill="#555a78"/><path d="M433 167.5c4-1 9-2.4 13.5-2.6 5-.4 9.5.8 12.5 3.6 3 2.8 4.4 6.6 3.8 10.5l-2-1c.2-3.4-1.3-6.4-4.3-8.4-3.4-2.2-8-2-12.5-1.2-4 .8-8 1.6-11.6.6z" fill="#b7b3d3"/><path d="M463.5 179l-12 2.5M463.5 179.5l-5 6.5-3 6.5M445 167l3.5 3.5" stroke="#9a98b8" stroke-width="1.1" fill="none"/><circle cx="433.5" cy="165.4" r=".7" fill="#111"/><path d="M527 154.5c5 0 8.3 3.4 8.5 8 2 3.5 3 8.5 2.4 14-.5 5.5-3 10-6 11.5h-9.5c-3.4-1.8-5.8-6-6.4-11.5-.6-5.5.4-10.5 2.5-14 .2-4.6 3.5-8 8.5-8z" fill="#866538"/><path d="M527 165c3 0 5.5 3.5 6 9.5.4 6-1.6 11-6 12.5-4.4-1.5-6.4-6.5-6-12.5.5-6 3-9.5 6-9.5z" fill="#c7a468"/><path d="M522.5 170l1 3M526 172l1 4M530 170l1 3M523 178l1 3M528 179l1 3M531.5 176l.5 3M525 184l.5 2" stroke="#5e4220" stroke-width="1"/><circle cx="523.7" cy="160.6" r="2.3" fill="#9a7a48"/><circle cx="530.3" cy="160.6" r="2.3" fill="#9a7a48"/><circle cx="523.7" cy="160.6" r="1" fill="#1a1208"/><circle cx="530.3" cy="160.6" r="1" fill="#1a1208"/><path d="M526.3 162.5l.7 1.8.7-1.8z" fill="#d9c48a"/><path d="M519 189.3h6.5M528.5 189.3h7" stroke="#c9ae78" stroke-width="1.3"/><path d="M563 162.5l3-2.8c.8-1.4 2.6-1.9 4-1.2 1.7.9 2.4 3 2 5.5-.8 4.5-1.7 9.5-1.3 14 1.7-3.5 4.5-6.5 8.3-8.5 4-2 9-2.3 13.3-1.3 4.3 1 8.3 3 11 6 2.5-.3 5.8-1.8 8.5-4.2-.8 4.5-3.8 8.8-8.8 11.8-4.2 2.4-10 3.4-17 3.6-6.5.2-13-.2-16.5-1.6-2.4-1-3.3-3-3.3-5.8.1-4.5 1.2-9.5 1.9-13.8.3-1.8.2-3-.8-3.2z" fill="#f1f1ef" stroke="#b0b0ae" stroke-width=".7"/><path d="M576 181c1.5-4 5-7.5 9.5-8.8 5-1.3 10.5.2 14 3.3-2 3.5-6.5 6-12 6.8-4 .6-8.5.2-11.5-1.3z" fill="#d2d2d0"/><path d="M580 183c7 .8 15 .2 21-2.5" stroke="#c2c2c0" stroke-width=".8" fill="none"/><path d="M562.8 162.8l3.4-2.6.6 1.8z" fill="#d97a28"/><path d="M566 159.7l1.8-.6.4 1.7-1.4.6z" fill="#222"/><path d="M667.3 180.5c-2.5-5.5-8.5-10.5-15-11.5.3 4.5 1.8 8.5 4 11.5.5 1 .8 2.2 1.3 3.2 1.2 2.2 3 3.6 4.5 3.6 2.5-.3 4.6-3.3 5.2-6.8z" fill="#d67a2c" stroke="#6e3a18" stroke-width=".7"/><path d="M669.3 180.5c2.5-5.5 8.5-10.3 15.2-10.8-.3 4.3-1.8 8-4 11-.5 1-.8 2.2-1.3 3.2-1.2 2.2-3 3.6-4.7 3.4-2.5-.3-4.6-3.3-5.2-6.8z" fill="#d67a2c" stroke="#6e3a18" stroke-width=".7"/><circle cx="658" cy="175" r="1.2" fill="#f3d9a6"/><circle cx="678.5" cy="175.5" r="1.2" fill="#f3d9a6"/><circle cx="661.5" cy="183" r="1" fill="#f3d9a6"/><circle cx="675" cy="183" r="1" fill="#f3d9a6"/><circle cx="655.5" cy="171.5" r=".9" fill="#6e3a18"/><circle cx="681" cy="172.5" r=".9" fill="#6e3a18"/><circle cx="662.5" cy="178" r=".9" fill="#6e3a18"/><circle cx="674" cy="178" r=".9" fill="#6e3a18"/><path d="M668.3 177v8.5" stroke="#4a2a10" stroke-width="1.3"/><path d="M714.3 186.5c.2-4.5 2.4-9.5 6-13.3 3-3.3 6.6-5.8 10.5-6.3 3.8-.4 7.3 1.4 9.5 4.3 1.4 2 1.7 4 .7 6-1.7 3.5-5 6.5-9 8.5-3.5 1.7-7.5 2.7-11.5 2.7-2.7 0-5-.5-6.2-1.9z" fill="#b8502c"/><path d="M726 168.5c3-1.6 6.5-1.6 9.5-.2 3 1.5 5.3 4 5.8 7-2 3.3-5.5 5.8-9.3 7.3-1-4.5-3-9.5-6-14.1z" fill="#dc952e"/><path d="M734 168c1-2.5 2.5-4.8 4.5-6.6.5 2.5.5 5.5-.2 8.2zM739.5 172.5c4.5-1.7 9.5-2.2 14-1.5-2.3 1-4.3 2.5-5.8 4.3 3.3.2 6.5 1 9.3 2.3-5.5 1.4-12 1.2-17.5-.6zM728 187c2.5-.4 5 .2 7 1.8-2.5.8-5.5.8-7.8-.2zM733 181c3 .3 6 1.3 8.5 2.8-3.2.8-6.5.6-9.5-.5z" fill="#e6ae3c"/><circle cx="719" cy="182" r="1.1" fill="#2a1408"/><path d="M720 177c1.8-1.3 4-2 6.3-2" stroke="#e0b060" stroke-width="1" fill="none"/><path d="M408 214.4c4 2 7.6 5 11 8.5 3.3-2.6 6.8-5 10.5-7 3.2-1.8 6.6-3.5 10-4.8l2.2-9.6c3 2 5.2 4.6 6.6 7.8 4-.3 8-.2 12 .3 7.5 1 15 2.8 21.6 5.4-1.3 2.8-3.8 5-7 6.6-5.5 2.7-12 3.8-18.8 4.2l-6.4 4-.5-3.7c-4 .3-8.2 0-12.4-.6l-1.8 1.8-1-2.2c-4-.7-8-1.5-11.3-2.3-1.4 5-3.5 9.5-6.6 13.5-.8-5.5-.3-10.5 1-15-2.6-2-5.6-4.3-9.1-6.9z" fill="#3d93bd"/><path d="M429.5 216c3.2-1.8 6.6-3.5 10-4.8l2.2-9.6c3 2 5.2 4.6 6.6 7.8 4-.3 8-.2 12 .3 7.5 1 15 2.8 21.6 5.4-7-.6-14.5-1-21.5-.4-10.5.8-21 2.5-30.9 1.3z" fill="#2d6f96"/><path d="M428 224c10 1.5 21 1.8 31.5.4 6.5-.9 12.5-2.5 17.5-5-1.4 2-3.5 3.5-6 4.7-5.5 2.5-12 3.4-18.8 3.8-8.4.4-17-.8-24.2-3.9z" fill="#a9d6e8"/><path d="M408 214.4l5.5 1.6 7.5 5 1.5 4.5-4.5 4.5-3 6.8-1-8.5 2-5z" fill="#3689b3"/><path d="M453 222.5l-3.3 7.6-2.7-3.3-1.5-3.3z" fill="#2d6f96"/><path d="M433 219.5h2M439 218h1.5M445 219.5h2M451 217.5h1.5M457 219h2M463 216.8h1.5M468 218.5h1.5M442 214.5h1.5M455 213.5h1.5" stroke="#e6f4fa" stroke-width=".9"/><circle cx="474.5" cy="216.5" r=".8" fill="#0f222c"/><path d="M500.9 196c2.5 1 5 3 7 5.8 3.5 5 6.5 10.5 9.5 16 1.6 3 3.3 5.6 5.2 7.6l-11.5 3.3c-3-3-5.5-7-7.3-11.5-2.5-6.5-3.8-14-2.9-21.2z" fill="#3f3b36"/><path d="M504 203c2.5 6 5.5 12 9 17.5M507 201c3 5.5 6 11 9.5 16" stroke="#6a655c" stroke-width=".8" fill="none"/><path d="M509.5 228.5c3.5-2.6 8-3.8 12.5-3.5 3 .2 5.5.7 7.5.5l2.5 2.5c-2 2.5-5.5 4.3-9.5 5-4.5.8-9.5.3-13.5-1.5z" fill="#c5b7a3"/><path d="M520 231c4 .8 8.5 1.2 13 .8l4 1.7c-5 1-11 .8-16-.2z" fill="#8e8273"/><path d="M526.5 226.5c3.5-.5 7-1.7 10-3.5l3.3-1.2 1.7.7-1.5 1.3-2.5.5c-2.8 2-6 3.5-9.5 4.2z" fill="#1c1a18"/><path d="M538.5 222.3l1.3-.3" stroke="#eee" stroke-width=".8"/><path d="M502.4 232.5c2.5-1.5 5.5-2.3 8.5-2.3l1.8 3.3c-1 2.5-3 4.5-5.5 5.8-2.5-.5-4.3-2-5-4.3-.2-.9-.1-1.7.2-2.5z" fill="#24211e"/><path d="M569 196l2.5 2.5.5-2.7 2.3 3.5 1-2.5c2.5 3.5 4.7 7.5 6.5 11.5l6 3.5c3.5-.8 6.5-.6 9.3.7 3.5-1.5 6.5-3.5 9.3-5.8 4.7-3.8 10-6.3 15.9-7.7l-2.6 2.7 2.9-.4-3 2.9 2.8.2-3.3 2.6 2.3.7c-3 2.6-6.3 4.7-9.8 6.2l-3.5 4.6-2-2.2c-2 .9-4.2 1.6-6.2 2-2.3.6-4.2 1.7-5.2 3.3.7 4.3.2 8.3-1.3 12l2.7 4.5-2.5 1.2-2.7-4.3-4 1-3-3c-2.5-2-4.2-5-4.8-8.6-3.5-1.5-6.8-4-9.3-7.3-3.7-4.8-5.6-11-4.8-17.3z" fill="#1d1d20"/><path d="M588 211.5c2.7-1.8 6.3-2.2 9-.8l2.3 1.6-3 .8c-1.6 1.6-4 2.5-6.3 2.3-1.3-.2-2-1.2-2-2.4z" fill="#f0f0ec"/><path d="M597 211.8l2.5.8-1.8 1z" fill="#dba420"/><path d="M573 227.5c2.5.7 5 2.3 6.8 4.5 1.3 1.7 2.7 3 4.2 3.8-.8 2.5-2.7 4.8-5.3 6.2l-1.3-1.8-1.2 2.2-1.5-2-1.5 1.5c-1.5-2.5-2.3-5.5-2.2-8.3.1-2.3.8-4.4 2-6.1z" fill="#e2e0da" stroke="#bcbab4" stroke-width=".5"/><path d="M585.5 234l1.5 4M589.5 234l1.3 3.8" stroke="#c9a232" stroke-width="1.1"/><path d="M650 223.5c-1.5-2.7-2-5.8-1-8.5 2.3 1.5 4 4 4.8 6.8zM649.5 229.5c-3.3-1-7-.8-9.8.7 2.7 1.8 6.5 2.2 9.6 1.2zM651 234.5c-2 1.5-4.5 3.5-5.5 5.5 1.8 3.3 4 6 6.3 8 .8-3.5.8-7 .2-10.5z" fill="#36a69c"/><ellipse cx="661.8" cy="229" rx="12.6" ry="7.4" transform="rotate(6 661.8 229)" fill="#4fb7a6"/><ellipse cx="661.8" cy="229" rx="9.8" ry="5.2" transform="rotate(6 661.8 229)" fill="#9ccf8e"/><path d="M655 227.5l2.5 2.5M660 227l2.5 3M665 228l2.5 3M669.5 229.5l1.5 2" stroke="#d08a48" stroke-width="1.1"/><path d="M673.5 226.8c2.5-1 5.5-.3 7.5 1.7 1 1 1.5 2.2 1.5 3.3-2.3.8-5-.2-7-1.7z" fill="#46ac9c"/><path d="M720.2 215.2l2-1.6c.6-1.7 2.3-2.8 4-2.6 2.2.2 3.8 1.7 4.3 3.7.3 1.2.5 2.3 1 3.3 4 3 7.7 6.7 11 10.7 3.5 4.2 7.5 8 12 11.3l5 5c-3.7-.4-7.3-1.6-10.6-3.4-3.3 1.4-7 2-10.7 1.5-4.3-.5-8-2.5-10.5-5.7-2.6-3.3-3.8-7.7-3.6-12 .1-2.5.5-5 1.3-7.3l-2.3-1.1z" fill="#7489a5"/><path d="M727 221.5c3.5 1.2 6.5 3.5 9 6.3 3 3.4 6 6.6 9.5 9.4-3.3 1.4-7 2-10.5 1.5-2.8-2.3-5-5.3-6.3-8.7-1-2.7-1.6-5.6-1.7-8.5z" fill="#5f7592"/><path d="M724 218.8c2.2-.7 4.6-.5 6.6.4l-1 2.8c-1.8.3-3.8 0-5.3-.9z" fill="#f2f4f5"/><circle cx="724.8" cy="213.8" r=".6" fill="#1a1a1a"/><path d="M733 243.5l-.5 2M736.5 243.8l-.3 1.8M729.5 245.5h8" stroke="#8a8f98" stroke-width=".8"/><g font-family="Liberation Serif, Noto Serif CJK SC, serif" font-size="14" fill="#3a3a3a"><text x="470" y="181.3">①</text><text x="543" y="181.3">②</text><text x="614.5" y="181.3">③</text><text x="686.5" y="181.3">④</text><text x="758.5" y="181.3">⑤</text><text x="469.2" y="238.3">⑥</text><text x="541.5" y="238.3">⑦</text><text x="614" y="238.3">⑧</text><text x="686.5" y="238.3">⑨</text><text x="758.5" y="238.3">⑩</text></g><g font-family="Liberation Sans, Noto Sans CJK SC, sans-serif" font-weight="500" fill="#111"><text x="416.3" y="271" font-size="17.2">会游泳的</text><text x="553.5" y="274.7" font-size="17.2">会飞的</text><text x="475" y="367.3" font-size="17.2">表示什么？</text></g><ellipse cx="469.5" cy="306.2" rx="84.5" ry="29.4" fill="none" stroke="#3b8fd6" stroke-width="1"/><ellipse cx="561.2" cy="308" rx="93.5" ry="28" fill="none" stroke="#3b8fd6" stroke-width="1"/><g font-family="Liberation Sans, Noto Sans CJK SC, sans-serif" font-size="19.6" font-weight="500" fill="#d6231e"><text x="413.7" y="302">①⑤</text><text x="413.7" y="325.5">⑥⑨</text><text x="490.4" y="314">③⑦</text><text x="559" y="315">②④⑧⑩</text></g><path d="M506.6 349.5v-15M502.8 338.5l3.8-5 3.8 5" stroke="#c00000" stroke-width="1.6" fill="none"/><g font-family="Liberation Sans, Noto Sans CJK SC, sans-serif" font-weight="500" fill="#d6231e"><text x="597" y="365.3" font-size="19.6">既会游泳又会飞的</text><text x="595.5" y="364.8" font-size="18" text-anchor="end">（</text><text x="756.5" y="364.8" font-size="18">）</text></g><path d="M755.5 332l3-1.5 1.5 1 2.5-1 1.5 2.5-2 2.5 4.5 6-2.5 2.5-5-7.5z" fill="#f6d3bd"/><path d="M783.8 343.5c2-1 4 .5 4.2 3 .2 1.5-.5 3-1.7 3.8z" fill="#f2c23a"/><path d="M780 348.5c2.5-1.8 6-1.3 7.3 1.2 1.3 2.7.5 6.5-1.8 8.5-2 1.6-4.6 1.3-6-.5z" fill="#f39ab4"/><path d="M787 352.5c2.5-.3 5 .8 6.3 2.8-.8 1.8-2.8 3-5 2.8z" fill="#f6d3bd"/><path d="M781 358.5c1.5 1 3.5 1.2 5 .3" stroke="#f2c23a" stroke-width="1.5" fill="none"/><path d="M768.2 331l17.8 7.6-8.7 23-12.1-.8z" fill="#1f73c9"/><path d="M765.6 361l10.5 1.8-6.4 8.8z" fill="#f3cfa0"/><path d="M768.2 368.6l2.8.4-1.4 2.8z" fill="#222"/><path d="M772.8 326.8c2.5-1.3 6-1 8.8.6 1.8 1 3 2.3 3.4 3.6l-12.5-2.8z" fill="#f0b02c"/><path d="M768 331c.5-2.5 3-4 6.5-3.8 4 .3 8.5 2 11 4.8 1.6 1.8 2.3 3.8 1.8 5.6l-3 1.2c-1-2.2-3.5-4-7-5.4-3.2-1.2-6.5-1.6-8.8-1z" fill="#d42b22"/><ellipse cx="772" cy="338.3" rx="1.5" ry="2" fill="#e8f1fb"/><ellipse cx="777.3" cy="339.6" rx="1.5" ry="2" fill="#e8f1fb"/><circle cx="772.3" cy="338.8" r=".7" fill="#1a3c6e"/><circle cx="777.6" cy="340.1" r=".7" fill="#1a3c6e"/><path d="M770.8 345.3l5 .9-.6 2-4-.8z" fill="#f3f8fd"/><path d="M771 372.3h5.5M775.5 370.5h7.5" stroke="#bbb" stroke-width=".6"/></g><rect x="219" y="351" width="76" height="43" fill="#fff"/><rect x="219.5" y="351.5" width="17" height="3" fill="#3dbcb2"/><rect x="219.5" y="356" width="75" height="38" fill="#c9cbe4"/><path d="M219.5 356h75v8c-22-6-52-6-75 0z" fill="#eeeef6"/><text x="257.5" y="364" text-anchor="middle" font-family="Liberation Sans, Noto Sans CJK SC, sans-serif" font-size="3.8" fill="#5a5e9a">背景板</text><g stroke="#9a9ecc" stroke-width=".4"><path d="M226 368h27M262 368h27"/><path d="M226 371.5h27M262 371.5h27"/><path d="M226 375h27M262 375h27"/><path d="M226 378.5h27M262 378.5h27"/></g></g>
<path d="M250.5 393h6M253.5 390v6" stroke="#444" stroke-width="0.8" fill="none" />
<path d="M314 391.5L857 391.5" stroke="#dfe1da" stroke-width="0.7" fill="none" />
<text x="319.8" y="402.3" font-size="7.1" fill="#9a9a96" text-anchor="start" font-weight="normal" >单击此处添加备注</text>
<path d="M194 409.5L885 409.5" stroke="#dfe1da" stroke-width="0.7" fill="none" />
<text x="200.7" y="417.4" font-size="6.5" fill="#444" text-anchor="start" font-weight="normal" letter-spacing=".25" word-spacing=".8">幻灯片 12 / 21</text>
<path d="M250 411.5L250 420" stroke="#d5d8d2" stroke-width="0.7" fill="none" />
<path d="M259 413h4.5v3.5H259zM261 416.5v2.5M263.5 418v1.5M260 419.5h2" stroke="#555" stroke-width="0.7" fill="none" />
<text x="268" y="417.4" font-size="6.3" fill="#444" text-anchor="start" font-weight="normal" >默认设计模板</text>
<path d="M315 411.5L315 420" stroke="#d5d8d2" stroke-width="0.7" fill="none" />
<path d="M325 418.3l2.7-5 2.7 5z" stroke="#e89a1c" stroke-width="0.5" fill="#f0a520" />
<text x="334.6" y="417.4" font-size="6.3" fill="#444" text-anchor="start" font-weight="normal" >缺失字体</text>
<path d="M508.5 413.5h6v5.5h-6zM509.5 413.5l1-1.5h3l1 1.5" stroke="#555" stroke-width="0.7" fill="none" />
<text x="517.6" y="417.4" font-size="6.3" fill="#444" text-anchor="start" font-weight="normal" >智能美化</text>
<path d="M547.1 414.5L548.6 416.1L550.1 414.5" stroke="#555" stroke-width="0.8" fill="none"/>
<path d="M558.5 411.5L558.5 420" stroke="#d5d8d2" stroke-width="0.7" fill="none" />
<path d="M568 413.5h6M568 416h6M568 418.5h3.5" stroke="#555" stroke-width="0.7" fill="none" />
<text x="577" y="417.4" font-size="6.3" fill="#444" text-anchor="start" font-weight="normal" >备注</text>
<path d="M593.5 414.5L595 416.1L596.5 414.5" stroke="#555" stroke-width="0.8" fill="none"/>
<path d="M608.5 418.5v-5.5h6.5v4" stroke="#555" stroke-width="0.8" fill="none" />
<path d="M612 419l1.5-1.5" stroke="#555" stroke-width="0.8" fill="none" />
<text x="618.6" y="417.4" font-size="6.3" fill="#444" text-anchor="start" font-weight="normal" >批注</text>
<path d="M640 411.5L640 420" stroke="#d5d8d2" stroke-width="0.7" fill="none" />
<rect x="644.5" y="410.5" width="12" height="10" fill="#dcdfd8" rx="1.5" />
<path d="M647 412.5h7v6h-7zM649.3 412.5v6" stroke="#444" stroke-width="0.8" fill="none" />
<path d="M664.5 412.5h3v2.5h-3zM669 412.5h3v2.5h-3zM664.5 416.5h3v2.5h-3zM669 416.5h3v2.5h-3z" stroke="#555" stroke-width="0.7" fill="none" />
<path d="M682 413h3.5l.5.8.5-.800H690v6h-3.5l-.5-.800-.5.8H682z" stroke="#555" stroke-width="0.7" fill="none" />
<path d="M697 411.5L697 420" stroke="#d5d8d2" stroke-width="0.7" fill="none" />
<rect x="703" y="410.5" width="10.5" height="9.5" fill="#e8631c" rx="1.5" />
<path d="M707 413v4.5l3.5-2.2z" stroke="#fff" stroke-width="0.3" fill="#fff" />
<path d="M718.5 414.5L720 416.1L721.5 414.5" stroke="#555" stroke-width="0.8" fill="none"/>
<path d="M728.5 411.5L728.5 420" stroke="#d5d8d2" stroke-width="0.7" fill="none" />
<path d="M737 414.5v-2h2M741.5 412.5h2v2M743.5 416.5v2h-2M739 418.5h-2v-2" stroke="#555" stroke-width="0.7" fill="none" />
<rect x="738.8" y="414.3" width="3" height="2.5" fill="none" rx="0" stroke="#555" stroke-width="0.6"/>
<text x="757" y="417.4" font-size="6" fill="#555" text-anchor="start" font-weight="normal" >85%</text>
<path d="M778.5 414.5L780 416.1L781.5 414.5" stroke="#777" stroke-width="0.8" fill="none"/>
<path d="M791.5 415.5L798.5 415.5" stroke="#333" stroke-width="1" fill="none" />
<path d="M805.5 415.5L829 415.5" stroke="#3a7fd5" stroke-width="1" fill="none" />
<path d="M830 415.5L864 415.5" stroke="#c9ccc5" stroke-width="0.8" fill="none" />
<circle cx="829.8" cy="415.5" r="1.3" fill="#fff" stroke="#3a7fd5" stroke-width="0.6"/>
<path d="M871.5 415.5h6.5M874.7 412.3v6.5" stroke="#333" stroke-width="1" fill="none" />
<path d="M857.5 115L857.5 409" stroke="#dde0d8" stroke-width="0.7" fill="none" />
<rect x="850.2" y="241" width="3.6" height="26" fill="#cdd0ca" rx="1.5" />
<path d="M851 120.5l1-1.5 1 1.5z" stroke="#666" stroke-width="0.3" fill="#666" />
<path d="M851 365l1 1.5 1-1.5z" stroke="#666" stroke-width="0.3" fill="#666" />
<path d="M851 373.5l1 1.3 1-1.3zM851 375.5l1 1.3 1-1.3z" stroke="#666" stroke-width="0.3" fill="#666" />
<path d="M851 383.5l1 1.3 1-1.3zM851 381.8l1-1.3 1 1.3z" stroke="#666" stroke-width="0.3" fill="#666" />
<path d="M869 128L876 128" stroke="#555" stroke-width="0.8" fill="none" />
<path d="M869 143.5h7M869 147h7" stroke="#555" stroke-width="0.7" fill="none" />
<circle cx="871" cy="143.5" r="1.1" fill="#ecede6" stroke="#555" stroke-width="0.6"/><circle cx="874.5" cy="147" r="1.1" fill="#ecede6" stroke="#555" stroke-width="0.6"/>
<path d="M872.5 162.5l1.3 2.7 2.9.3-2.2 2 .7 2.9-2.7-1.5-2.7 1.5.7-2.9-2.2-2 2.9-.3z" stroke="#555" stroke-width="0.7" fill="none" />
<path d="M869 185h4.5v4.5H869zM871.5 187.5h4.5v3.5h-4.5z" stroke="#555" stroke-width="0.7" fill="none" />
<path d="M869 207.5h6.5v6H869zM870.5 212l2-3 1.5 2 1.5-2.5" stroke="#555" stroke-width="0.7" fill="none" />
<path d="M869.5 229l5.5 6M875.5 229l-5.5 6" stroke="#555" stroke-width="0.7" fill="none" />
<circle cx="869.8" cy="235.5" r="1" fill="none" stroke="#555" stroke-width="0.6"/><circle cx="875.3" cy="235.5" r="1" fill="none" stroke="#555" stroke-width="0.6"/>
<path d="M869 250.5h7v6h-7zM872.5 250.5v6M874 252.5h1M874 254.5h1" stroke="#555" stroke-width="0.7" fill="none" />
<path d="M870 272.5l2-1 1 1 1-1 2 1-.8 2h-.7v4h-3.5v-4h-.7z" stroke="#555" stroke-width="0.7" fill="none" />
<circle cx="872.5" cy="297.5" r="3.3" fill="none" stroke="#555" stroke-width="0.7"/>
<text x="872.5" y="299.8" font-size="6" fill="#555" text-anchor="middle" font-weight="normal" >?</text>
<circle cx="870" cy="319.5" r="0.6" fill="#666"/>
<circle cx="872.5" cy="319.5" r="0.6" fill="#666"/>
<circle cx="875" cy="319.5" r="0.6" fill="#666"/>
<rect x="358" y="126.5" width="445" height="249.5" fill="#fff"/><path d="M358 127h106.5l-7 11 7 11H358l7-11z" fill="#3dbcb2"/><path d="M358 127l7 11-7 11zM464.5 127l-7 11 7 11z" fill="#8fdcd5" opacity=".6"/><text x="378" y="144.3" font-family="Liberation Sans, Noto Sans CJK SC, sans-serif" font-size="17" font-weight="bold" fill="#fff" letter-spacing=".2">对应练习</text><path d="M430 166.2c2-2.6 5-4.6 8.5-5.8 6-1.6 13-1.6 19 .8 5 2.2 8.5 7 9 13 .2 2.2-.4 4.2-1.6 5.6l-2.4-1.2c.4-4.6-1.4-8.6-5.5-11-3.6-2-8.5-1.8-13-.8-4.5.8-9 1.8-12.6 1z" fill="#555a78"/><path d="M433 167.5c4-1 9-2.4 13.5-2.6 5-.4 9.5.8 12.5 3.6 3 2.8 4.4 6.6 3.8 10.5l-2-1c.2-3.4-1.3-6.4-4.3-8.4-3.4-2.2-8-2-12.5-1.2-4 .8-8 1.6-11.6.6z" fill="#b7b3d3"/><path d="M463.5 179l-12 2.5M463.5 179.5l-5 6.5-3 6.5M445 167l3.5 3.5" stroke="#9a98b8" stroke-width="1.1" fill="none"/><circle cx="433.5" cy="165.4" r=".7" fill="#111"/><path d="M527 154.5c5 0 8.3 3.4 8.5 8 2 3.5 3 8.5 2.4 14-.5 5.5-3 10-6 11.5h-9.5c-3.4-1.8-5.8-6-6.4-11.5-.6-5.5.4-10.5 2.5-14 .2-4.6 3.5-8 8.5-8z" fill="#866538"/><path d="M527 165c3 0 5.5 3.5 6 9.5.4 6-1.6 11-6 12.5-4.4-1.5-6.4-6.5-6-12.5.5-6 3-9.5 6-9.5z" fill="#c7a468"/><path d="M522.5 170l1 3M526 172l1 4M530 170l1 3M523 178l1 3M528 179l1 3M531.5 176l.5 3M525 184l.5 2" stroke="#5e4220" stroke-width="1"/><circle cx="523.7" cy="160.6" r="2.3" fill="#9a7a48"/><circle cx="530.3" cy="160.6" r="2.3" fill="#9a7a48"/><circle cx="523.7" cy="160.6" r="1" fill="#1a1208"/><circle cx="530.3" cy="160.6" r="1" fill="#1a1208"/><path d="M526.3 162.5l.7 1.8.7-1.8z" fill="#d9c48a"/><path d="M519 189.3h6.5M528.5 189.3h7" stroke="#c9ae78" stroke-width="1.3"/><path d="M563 162.5l3-2.8c.8-1.4 2.6-1.9 4-1.2 1.7.9 2.4 3 2 5.5-.8 4.5-1.7 9.5-1.3 14 1.7-3.5 4.5-6.5 8.3-8.5 4-2 9-2.3 13.3-1.3 4.3 1 8.3 3 11 6 2.5-.3 5.8-1.8 8.5-4.2-.8 4.5-3.8 8.8-8.8 11.8-4.2 2.4-10 3.4-17 3.6-6.5.2-13-.2-16.5-1.6-2.4-1-3.3-3-3.3-5.8.1-4.5 1.2-9.5 1.9-13.8.3-1.8.2-3-.8-3.2z" fill="#f1f1ef" stroke="#b0b0ae" stroke-width=".7"/><path d="M576 181c1.5-4 5-7.5 9.5-8.8 5-1.3 10.5.2 14 3.3-2 3.5-6.5 6-12 6.8-4 .6-8.5.2-11.5-1.3z" fill="#d2d2d0"/><path d="M580 183c7 .8 15 .2 21-2.5" stroke="#c2c2c0" stroke-width=".8" fill="none"/><path d="M562.8 162.8l3.4-2.6.6 1.8z" fill="#d97a28"/><path d="M566 159.7l1.8-.6.4 1.7-1.4.6z" fill="#222"/><path d="M667.3 180.5c-2.5-5.5-8.5-10.5-15-11.5.3 4.5 1.8 8.5 4 11.5.5 1 .8 2.2 1.3 3.2 1.2 2.2 3 3.6 4.5 3.6 2.5-.3 4.6-3.3 5.2-6.8z" fill="#d67a2c" stroke="#6e3a18" stroke-width=".7"/><path d="M669.3 180.5c2.5-5.5 8.5-10.3 15.2-10.8-.3 4.3-1.8 8-4 11-.5 1-.8 2.2-1.3 3.2-1.2 2.2-3 3.6-4.7 3.4-2.5-.3-4.6-3.3-5.2-6.8z" fill="#d67a2c" stroke="#6e3a18" stroke-width=".7"/><circle cx="658" cy="175" r="1.2" fill="#f3d9a6"/><circle cx="678.5" cy="175.5" r="1.2" fill="#f3d9a6"/><circle cx="661.5" cy="183" r="1" fill="#f3d9a6"/><circle cx="675" cy="183" r="1" fill="#f3d9a6"/><circle cx="655.5" cy="171.5" r=".9" fill="#6e3a18"/><circle cx="681" cy="172.5" r=".9" fill="#6e3a18"/><circle cx="662.5" cy="178" r=".9" fill="#6e3a18"/><circle cx="674" cy="178" r=".9" fill="#6e3a18"/><path d="M668.3 177v8.5" stroke="#4a2a10" stroke-width="1.3"/><path d="M714.3 186.5c.2-4.5 2.4-9.5 6-13.3 3-3.3 6.6-5.8 10.5-6.3 3.8-.4 7.3 1.4 9.5 4.3 1.4 2 1.7 4 .7 6-1.7 3.5-5 6.5-9 8.5-3.5 1.7-7.5 2.7-11.5 2.7-2.7 0-5-.5-6.2-1.9z" fill="#b8502c"/><path d="M726 168.5c3-1.6 6.5-1.6 9.5-.2 3 1.5 5.3 4 5.8 7-2 3.3-5.5 5.8-9.3 7.3-1-4.5-3-9.5-6-14.1z" fill="#dc952e"/><path d="M734 168c1-2.5 2.5-4.8 4.5-6.6.5 2.5.5 5.5-.2 8.2zM739.5 172.5c4.5-1.7 9.5-2.2 14-1.5-2.3 1-4.3 2.5-5.8 4.3 3.3.2 6.5 1 9.3 2.3-5.5 1.4-12 1.2-17.5-.6zM728 187c2.5-.4 5 .2 7 1.8-2.5.8-5.5.8-7.8-.2zM733 181c3 .3 6 1.3 8.5 2.8-3.2.8-6.5.6-9.5-.5z" fill="#e6ae3c"/><circle cx="719" cy="182" r="1.1" fill="#2a1408"/><path d="M720 177c1.8-1.3 4-2 6.3-2" stroke="#e0b060" stroke-width="1" fill="none"/><path d="M408 214.4c4 2 7.6 5 11 8.5 3.3-2.6 6.8-5 10.5-7 3.2-1.8 6.6-3.5 10-4.8l2.2-9.6c3 2 5.2 4.6 6.6 7.8 4-.3 8-.2 12 .3 7.5 1 15 2.8 21.6 5.4-1.3 2.8-3.8 5-7 6.6-5.5 2.7-12 3.8-18.8 4.2l-6.4 4-.5-3.7c-4 .3-8.2 0-12.4-.6l-1.8 1.8-1-2.2c-4-.7-8-1.5-11.3-2.3-1.4 5-3.5 9.5-6.6 13.5-.8-5.5-.3-10.5 1-15-2.6-2-5.6-4.3-9.1-6.9z" fill="#3d93bd"/><path d="M429.5 216c3.2-1.8 6.6-3.5 10-4.8l2.2-9.6c3 2 5.2 4.6 6.6 7.8 4-.3 8-.2 12 .3 7.5 1 15 2.8 21.6 5.4-7-.6-14.5-1-21.5-.4-10.5.8-21 2.5-30.9 1.3z" fill="#2d6f96"/><path d="M428 224c10 1.5 21 1.8 31.5.4 6.5-.9 12.5-2.5 17.5-5-1.4 2-3.5 3.5-6 4.7-5.5 2.5-12 3.4-18.8 3.8-8.4.4-17-.8-24.2-3.9z" fill="#a9d6e8"/><path d="M408 214.4l5.5 1.6 7.5 5 1.5 4.5-4.5 4.5-3 6.8-1-8.5 2-5z" fill="#3689b3"/><path d="M453 222.5l-3.3 7.6-2.7-3.3-1.5-3.3z" fill="#2d6f96"/><path d="M433 219.5h2M439 218h1.5M445 219.5h2M451 217.5h1.5M457 219h2M463 216.8h1.5M468 218.5h1.5M442 214.5h1.5M455 213.5h1.5" stroke="#e6f4fa" stroke-width=".9"/><circle cx="474.5" cy="216.5" r=".8" fill="#0f222c"/><path d="M500.9 196c2.5 1 5 3 7 5.8 3.5 5 6.5 10.5 9.5 16 1.6 3 3.3 5.6 5.2 7.6l-11.5 3.3c-3-3-5.5-7-7.3-11.5-2.5-6.5-3.8-14-2.9-21.2z" fill="#3f3b36"/><path d="M504 203c2.5 6 5.5 12 9 17.5M507 201c3 5.5 6 11 9.5 16" stroke="#6a655c" stroke-width=".8" fill="none"/><path d="M509.5 228.5c3.5-2.6 8-3.8 12.5-3.5 3 .2 5.5.7 7.5.5l2.5 2.5c-2 2.5-5.5 4.3-9.5 5-4.5.8-9.5.3-13.5-1.5z" fill="#c5b7a3"/><path d="M520 231c4 .8 8.5 1.2 13 .8l4 1.7c-5 1-11 .8-16-.2z" fill="#8e8273"/><path d="M526.5 226.5c3.5-.5 7-1.7 10-3.5l3.3-1.2 1.7.7-1.5 1.3-2.5.5c-2.8 2-6 3.5-9.5 4.2z" fill="#1c1a18"/><path d="M538.5 222.3l1.3-.3" stroke="#eee" stroke-width=".8"/><path d="M502.4 232.5c2.5-1.5 5.5-2.3 8.5-2.3l1.8 3.3c-1 2.5-3 4.5-5.5 5.8-2.5-.5-4.3-2-5-4.3-.2-.9-.1-1.7.2-2.5z" fill="#24211e"/><path d="M569 196l2.5 2.5.5-2.7 2.3 3.5 1-2.5c2.5 3.5 4.7 7.5 6.5 11.5l6 3.5c3.5-.8 6.5-.6 9.3.7 3.5-1.5 6.5-3.5 9.3-5.8 4.7-3.8 10-6.3 15.9-7.7l-2.6 2.7 2.9-.4-3 2.9 2.8.2-3.3 2.6 2.3.7c-3 2.6-6.3 4.7-9.8 6.2l-3.5 4.6-2-2.2c-2 .9-4.2 1.6-6.2 2-2.3.6-4.2 1.7-5.2 3.3.7 4.3.2 8.3-1.3 12l2.7 4.5-2.5 1.2-2.7-4.3-4 1-3-3c-2.5-2-4.2-5-4.8-8.6-3.5-1.5-6.8-4-9.3-7.3-3.7-4.8-5.6-11-4.8-17.3z" fill="#1d1d20"/><path d="M588 211.5c2.7-1.8 6.3-2.2 9-.8l2.3 1.6-3 .8c-1.6 1.6-4 2.5-6.3 2.3-1.3-.2-2-1.2-2-2.4z" fill="#f0f0ec"/><path d="M597 211.8l2.5.8-1.8 1z" fill="#dba420"/><path d="M573 227.5c2.5.7 5 2.3 6.8 4.5 1.3 1.7 2.7 3 4.2 3.8-.8 2.5-2.7 4.8-5.3 6.2l-1.3-1.8-1.2 2.2-1.5-2-1.5 1.5c-1.5-2.5-2.3-5.5-2.2-8.3.1-2.3.8-4.4 2-6.1z" fill="#e2e0da" stroke="#bcbab4" stroke-width=".5"/><path d="M585.5 234l1.5 4M589.5 234l1.3 3.8" stroke="#c9a232" stroke-width="1.1"/><path d="M650 223.5c-1.5-2.7-2-5.8-1-8.5 2.3 1.5 4 4 4.8 6.8zM649.5 229.5c-3.3-1-7-.8-9.8.7 2.7 1.8 6.5 2.2 9.6 1.2zM651 234.5c-2 1.5-4.5 3.5-5.5 5.5 1.8 3.3 4 6 6.3 8 .8-3.5.8-7 .2-10.5z" fill="#36a69c"/><ellipse cx="661.8" cy="229" rx="12.6" ry="7.4" transform="rotate(6 661.8 229)" fill="#4fb7a6"/><ellipse cx="661.8" cy="229" rx="9.8" ry="5.2" transform="rotate(6 661.8 229)" fill="#9ccf8e"/><path d="M655 227.5l2.5 2.5M660 227l2.5 3M665 228l2.5 3M669.5 229.5l1.5 2" stroke="#d08a48" stroke-width="1.1"/><path d="M673.5 226.8c2.5-1 5.5-.3 7.5 1.7 1 1 1.5 2.2 1.5 3.3-2.3.8-5-.2-7-1.7z" fill="#46ac9c"/><path d="M720.2 215.2l2-1.6c.6-1.7 2.3-2.8 4-2.6 2.2.2 3.8 1.7 4.3 3.7.3 1.2.5 2.3 1 3.3 4 3 7.7 6.7 11 10.7 3.5 4.2 7.5 8 12 11.3l5 5c-3.7-.4-7.3-1.6-10.6-3.4-3.3 1.4-7 2-10.7 1.5-4.3-.5-8-2.5-10.5-5.7-2.6-3.3-3.8-7.7-3.6-12 .1-2.5.5-5 1.3-7.3l-2.3-1.1z" fill="#7489a5"/><path d="M727 221.5c3.5 1.2 6.5 3.5 9 6.3 3 3.4 6 6.6 9.5 9.4-3.3 1.4-7 2-10.5 1.5-2.8-2.3-5-5.3-6.3-8.7-1-2.7-1.6-5.6-1.7-8.5z" fill="#5f7592"/><path d="M724 218.8c2.2-.7 4.6-.5 6.6.4l-1 2.8c-1.8.3-3.8 0-5.3-.9z" fill="#f2f4f5"/><circle cx="724.8" cy="213.8" r=".6" fill="#1a1a1a"/><path d="M733 243.5l-.5 2M736.5 243.8l-.3 1.8M729.5 245.5h8" stroke="#8a8f98" stroke-width=".8"/><g font-family="Liberation Serif, Noto Serif CJK SC, serif" font-size="14" fill="#3a3a3a"><text x="470" y="181.3">①</text><text x="543" y="181.3">②</text><text x="614.5" y="181.3">③</text><text x="686.5" y="181.3">④</text><text x="758.5" y="181.3">⑤</text><text x="469.2" y="238.3">⑥</text><text x="541.5" y="238.3">⑦</text><text x="614" y="238.3">⑧</text><text x="686.5" y="238.3">⑨</text><text x="758.5" y="238.3">⑩</text></g><g font-family="Liberation Sans, Noto Sans CJK SC, sans-serif" font-weight="500" fill="#111"><text x="416.3" y="271" font-size="17.2">会游泳的</text><text x="553.5" y="274.7" font-size="17.2">会飞的</text><text x="475" y="367.3" font-size="17.2">表示什么？</text></g><ellipse cx="469.5" cy="306.2" rx="84.5" ry="29.4" fill="none" stroke="#3b8fd6" stroke-width="1"/><ellipse cx="561.2" cy="308" rx="93.5" ry="28" fill="none" stroke="#3b8fd6" stroke-width="1"/><g font-family="Liberation Sans, Noto Sans CJK SC, sans-serif" font-size="19.6" font-weight="500" fill="#d6231e"><text x="413.7" y="302">①⑤</text><text x="413.7" y="325.5">⑥⑨</text><text x="490.4" y="314">③⑦</text><text x="559" y="315">②④⑧⑩</text></g><path d="M506.6 349.5v-15M502.8 338.5l3.8-5 3.8 5" stroke="#c00000" stroke-width="1.6" fill="none"/><g font-family="Liberation Sans, Noto Sans CJK SC, sans-serif" font-weight="500" fill="#d6231e"><text x="597" y="365.3" font-size="19.6">既会游泳又会飞的</text><text x="595.5" y="364.8" font-size="18" text-anchor="end">（</text><text x="756.5" y="364.8" font-size="18">）</text></g><path d="M755.5 332l3-1.5 1.5 1 2.5-1 1.5 2.5-2 2.5 4.5 6-2.5 2.5-5-7.5z" fill="#f6d3bd"/><path d="M783.8 343.5c2-1 4 .5 4.2 3 .2 1.5-.5 3-1.7 3.8z" fill="#f2c23a"/><path d="M780 348.5c2.5-1.8 6-1.3 7.3 1.2 1.3 2.7.5 6.5-1.8 8.5-2 1.6-4.6 1.3-6-.5z" fill="#f39ab4"/><path d="M787 352.5c2.5-.3 5 .8 6.3 2.8-.8 1.8-2.8 3-5 2.8z" fill="#f6d3bd"/><path d="M781 358.5c1.5 1 3.5 1.2 5 .3" stroke="#f2c23a" stroke-width="1.5" fill="none"/><path d="M768.2 331l17.8 7.6-8.7 23-12.1-.8z" fill="#1f73c9"/><path d="M765.6 361l10.5 1.8-6.4 8.8z" fill="#f3cfa0"/><path d="M768.2 368.6l2.8.4-1.4 2.8z" fill="#222"/><path d="M772.8 326.8c2.5-1.3 6-1 8.8.6 1.8 1 3 2.3 3.4 3.6l-12.5-2.8z" fill="#f0b02c"/><path d="M768 331c.5-2.5 3-4 6.5-3.8 4 .3 8.5 2 11 4.8 1.6 1.8 2.3 3.8 1.8 5.6l-3 1.2c-1-2.2-3.5-4-7-5.4-3.2-1.2-6.5-1.6-8.8-1z" fill="#d42b22"/><ellipse cx="772" cy="338.3" rx="1.5" ry="2" fill="#e8f1fb"/><ellipse cx="777.3" cy="339.6" rx="1.5" ry="2" fill="#e8f1fb"/><circle cx="772.3" cy="338.8" r=".7" fill="#1a3c6e"/><circle cx="777.6" cy="340.1" r=".7" fill="#1a3c6e"/><path d="M770.8 345.3l5 .9-.6 2-4-.8z" fill="#f3f8fd"/><path d="M771 372.3h5.5M775.5 370.5h7.5" stroke="#bbb" stroke-width=".6"/>
</svg>
  
  <div class="abs" style="left:4.5px;top:441px;font-size:12px;line-height:14px">未选择源</div>
  <div class="abs" style="left:200px;top:436px;width:2px;height:22px;background:linear-gradient(90deg,#a6a6a6 50%,#fff 50%)"></div>
  <div class="abs" style="left:313px;top:436px;width:2px;height:22px;background:linear-gradient(90deg,#a6a6a6 50%,#fff 50%)"></div>
  <svg class="abs" style="left:210px;top:439px" width="16" height="16" viewBox="0 0 16 16" fill="#555"><path fill-rule="evenodd" d="M6.6 0h2.8l.4 2.1c.5.15.95.35 1.4.6l1.8-1.2 2 2-1.2 1.8c.25.45.45.9.6 1.4l2.1.4v2.8l-2.1.4c-.15.5-.35.95-.6 1.4l1.2 1.8-2 2-1.8-1.2c-.45.25-.9.45-1.4.6L9.400 16H6.600l-.4-2.1c-.5-.15-.95-.35-1.4-.6l-1.800 1.200-2-2 1.200-1.800c-.25-.45-.45-.9-.6-1.400L0 9.400V6.600l2.100-.4c.15-.5.35-.95.6-1.400L1.500 3l2-2 1.800 1.200c.45-.25.9-.45 1.400-.6zM8 4.800a3.200 3.200 0 1 0 0 6.400 3.200 3.200 0 0 0 0-6.400z"/></svg>
  <div class="abs" style="left:227.5px;top:441px;font-size:12px;line-height:14px;color:#6d6d6d">属性</div>
  <svg class="abs" style="left:262px;top:439px" width="17" height="17" viewBox="0 0 17 17"><circle cx="9.600" cy="9.300" r="6" fill="none" stroke="#6a6a6a" stroke-width="1.300" stroke-dasharray="1.600 1.400"/><circle cx="6.200" cy="6.200" r="5.500" fill="#5e5e5e"/><path d="M2.900 10.600L10.600 2.900M4.600 11.500L11.500 4.600M7 11.600L11.600 7" stroke="#f0f0f0" stroke-width=".85"/></svg>
  <div class="abs" style="left:278.5px;top:441px;font-size:12px;line-height:14px;color:#6d6d6d">滤镜</div>

  <div class="dock-title" style="left:0px;width:195px">场景<svg class="abs" style="right:6px;top:4.500px" width="9" height="9" viewBox="0 0 10 10" fill="none" stroke="#222" stroke-width="1.3"><path d="M3.500 3V.8h5.700v4.700H7"/><rect x=".7" y="3.300" width="5.800" height="5.800"/></svg></div>
<div class="dock-title" style="left:199px;width:200px">来源<svg class="abs" style="right:6px;top:4.500px" width="9" height="9" viewBox="0 0 10 10" fill="none" stroke="#222" stroke-width="1.3"><path d="M3.500 3V.8h5.700v4.700H7"/><rect x=".7" y="3.300" width="5.800" height="5.800"/></svg></div>
<div class="dock-title" style="left:403px;width:281px">混音器<svg class="abs" style="right:6px;top:4.500px" width="9" height="9" viewBox="0 0 10 10" fill="none" stroke="#222" stroke-width="1.3"><path d="M3.500 3V.8h5.700v4.700H7"/><rect x=".7" y="3.300" width="5.800" height="5.800"/></svg></div>
<div class="dock-title" style="left:688px;width:194px">转场特效<svg class="abs" style="right:6px;top:4.500px" width="9" height="9" viewBox="0 0 10 10" fill="none" stroke="#222" stroke-width="1.3"><path d="M3.500 3V.8h5.700v4.700H7"/><rect x=".7" y="3.300" width="5.800" height="5.800"/></svg></div>
<div class="dock-title" style="left:886px;width:193px">控件<svg class="abs" style="right:6px;top:4.500px" width="9" height="9" viewBox="0 0 10 10" fill="none" stroke="#222" stroke-width="1.3"><path d="M3.500 3V.8h5.700v4.700H7"/><rect x=".7" y="3.300" width="5.800" height="5.800"/></svg></div>

  <div class="list" style="left:0;width:195px"></div>
  <div class="abs" style="left:1px;top:677px;width:193px;height:25.5px;background:#f0f0f0"></div>
  <div class="abs" style="left:3.5px;top:492.5px;line-height:14px">场景</div>
  <div class="abs" style="left:1px;top:508px;width:193px;height:19px;background:#d9d9d9"></div>
  <div class="abs" style="left:3.5px;top:511.5px;line-height:14px">微课录制</div>
<svg class="abs" style="left:5.5px;top:682.500px" width="15" height="15" viewBox="0 0 15 15"><path d="M7.500 0v15M0 7.500h15" stroke="#111" stroke-width="1.800"/></svg><svg class="abs" style="left:29px;top:682.500px" width="16" height="15" viewBox="0 0 16 15"><path d="M0 7.500h16" stroke="#111" stroke-width="1.800"/></svg><div class="abs" style="left:51px;top:680px;width:1px;height:19px;background:#d0d0d0"></div><svg class="abs" style="left:57.5px;top:684px" width="17" height="11.500" viewBox="0 0 17 13" preserveAspectRatio="none"><path d="M1 11.500L8.500 2.500 16 11.500" fill="none" stroke="#111" stroke-width="2"/></svg><svg class="abs" style="left:80.5px;top:684px" width="17" height="11.500" viewBox="0 0 17 13" preserveAspectRatio="none"><path d="M1 1.500L8.500 10.500 16 1.500" fill="none" stroke="#111" stroke-width="2"/></svg>
  <div class="list" style="left:199px;width:200px"></div>
  <div class="abs" style="left:200px;top:677px;width:198px;height:25.5px;background:#f0f0f0"></div>
  <div class="abs" style="left:200px;top:508px;width:198px;height:19px;background:#e5f3ff"></div>
  <div class="abs" style="left:201px;top:489px;width:197px;height:19px;border:1px dotted #000"></div>
  <div class="abs" style="left:226.5px;top:492.5px;line-height:14px">图像</div>
  <div class="abs" style="left:226.5px;top:511.5px;line-height:14px">麦克风<span class="serif">/Aux</span></div>
  <div class="abs" style="left:226.5px;top:530.5px;line-height:14px">窗口采集</div>
<svg class="abs" style="left:205px;top:682.500px" width="15" height="15" viewBox="0 0 15 15"><path d="M7.500 0v15M0 7.500h15" stroke="#111" stroke-width="1.800"/></svg><svg class="abs" style="left:227.5px;top:682.500px" width="16" height="15" viewBox="0 0 16 15"><path d="M0 7.500h16" stroke="#111" stroke-width="1.800"/></svg><svg class="abs" style="left:250px;top:681px" width="17" height="17" viewBox="0 0 16 16" fill="#111"><path fill-rule="evenodd" d="M6.6 0h2.8l.4 2.1c.5.15.95.35 1.4.6l1.8-1.2 2 2-1.2 1.8c.25.45.45.9.6 1.4l2.1.4v2.8l-2.1.4c-.15.5-.35.95-.6 1.4l1.2 1.8-2 2-1.8-1.2c-.45.25-.9.45-1.4.6L9.400 16H6.600l-.4-2.1c-.5-.15-.95-.35-1.4-.6l-1.800 1.200-2-2 1.200-1.800c-.25-.45-.45-.9-.6-1.400L0 9.400V6.600l2.100-.4c.15-.5.35-.95.6-1.400L1.500 3l2-2 1.800 1.200c.45-.25.9-.45 1.400-.6zM8 4.800a3.200 3.200 0 1 0 0 6.400 3.200 3.200 0 0 0 0-6.400z"/></svg><div class="abs" style="left:273px;top:680px;width:1px;height:19px;background:#d0d0d0"></div><svg class="abs" style="left:279.5px;top:684px" width="17" height="11.500" viewBox="0 0 17 13" preserveAspectRatio="none"><path d="M1 11.500L8.500 2.500 16 11.500" fill="none" stroke="#111" stroke-width="2"/></svg><svg class="abs" style="left:302.5px;top:684px" width="17" height="11.500" viewBox="0 0 17 13" preserveAspectRatio="none"><path d="M1 1.500L8.500 10.500 16 1.500" fill="none" stroke="#111" stroke-width="2"/></svg>

  <svg class="abs" style="left:203px;top:490.500px" width="16" height="15.250" viewBox="0 0 16 15.250"><rect x="0" y="0" width="16" height="15.250" fill="#000"/><path d="M2 2h12v11.300h-.3L4.800 4.800H2z" fill="#fff"/><path d="M2 5.200l9.300 8.100H2z" fill="#000"/><path d="M7.600 4.800h3l3.400 3.200v5.300z" fill="#fff"/><path d="M10.300 4.700h3.200l0 3.200z" fill="#000"/><path d="M13.300 5.500h.8v7.800h-.8z" fill="#fff"/></svg>
  <svg class="abs" style="left:205.200px;top:509.200px" width="12" height="15.800" preserveAspectRatio="none" viewBox="0 0 14 17"><rect x="4.300" y="0" width="5.400" height="10" rx="2.700" fill="#000"/><path d="M1.300 6.500v1.300a5.700 5.200 0 0 0 11.400 0V6.500" fill="none" stroke="#000" stroke-width="1.600"/><path d="M7 12.500v3M3 16h8" stroke="#000" stroke-width="1.700"/></svg>
  <svg class="abs" style="left:203px;top:530.200px" width="13.700" height="11.600" viewBox="0 0 15 13" preserveAspectRatio="none"><rect x=".6" y=".6" width="13.800" height="11.800" fill="#fff" stroke="#000" stroke-width="1.200"/><path d="M.6 3.200h13.800" stroke="#000" stroke-width="1.200"/></svg>
<svg class="abs" style="left:359px;top:493.5px" width="16" height="10" viewBox="0 0 16 10"><path d="M0 5C2 1.700 4.800 0 8 0s6 1.700 8 5c-2 3.300-4.800 5-8 5S2 8.300 0 5z" fill="#000"/><circle cx="8" cy="5" r="3.600" fill="#fff"/><circle cx="8" cy="5" r="2.300" fill="#000"/></svg><svg class="abs" style="left:384px;top:491px" width="13" height="14" viewBox="0 0 13 14"><path d="M3.300 6V3.600C3.300 2 4.700 1 6.500 1s3.200 1 3.200 2.600v.6" fill="none" stroke="#8a8a8a" stroke-width="1.700"/><rect x=".5" y="5.800" width="12" height="8.200" fill="#808080"/></svg><svg class="abs" style="left:359px;top:512.5px" width="16" height="10" viewBox="0 0 16 10"><path d="M0 5C2 1.700 4.800 0 8 0s6 1.700 8 5c-2 3.300-4.800 5-8 5S2 8.300 0 5z" fill="#000"/><circle cx="8" cy="5" r="3.600" fill="#fff"/><circle cx="8" cy="5" r="2.300" fill="#000"/></svg><svg class="abs" style="left:384px;top:510px" width="13" height="14" viewBox="0 0 13 14"><path d="M3.300 6V3.600C3.300 2 4.700 1 6.500 1s3.200 1 3.200 2.600v.6" fill="none" stroke="#8a8a8a" stroke-width="1.700"/><rect x=".5" y="5.800" width="12" height="8.200" fill="#808080"/></svg><svg class="abs" style="left:359px;top:531.5px" width="16" height="10" viewBox="0 0 16 10"><path d="M0 5C2 1.700 4.800 0 8 0s6 1.700 8 5c-2 3.300-4.800 5-8 5S2 8.300 0 5z" fill="#000"/><circle cx="8" cy="5" r="3.600" fill="#fff"/><circle cx="8" cy="5" r="2.300" fill="#000"/></svg><svg class="abs" style="left:384px;top:529px" width="13" height="14" viewBox="0 0 13 14"><path d="M3.300 6V3.600C3.300 2 4.700 1 6.500 1s3.200 1 3.200 2.600v.6" fill="none" stroke="#8a8a8a" stroke-width="1.700"/><rect x=".5" y="5.800" width="12" height="8.200" fill="#808080"/></svg>
  <div class="abs" style="left:254.800px;top:523.900px;width:48.600px;height:48.600px;border-radius:50%;border:4.200px solid #e8772e"></div>
  <svg class="abs" style="left:278.400px;top:547.100px" width="20" height="31.500" viewBox="0 0 21 33"><path d="M1 1v25.500l5.800-5.600 4.300 10.300 4-1.700-4.300-10.100h8.300z" fill="#fff" stroke="#000" stroke-width="1.150" stroke-linejoin="round"/></svg>


  <div class="abs" style="left:403px;top:488px;width:281px;height:215.5px;border:1px solid #828790;background:#f0f0f0"></div>
  <div class="abs" style="left:666px;top:489px;width:1px;height:213px;background:#fff"></div>
  <svg class="abs" style="left:669px;top:494px" width="12" height="8" viewBox="0 0 12 8"><path d="M1 7L6 1.500 11 7" fill="none" stroke="#c4c4c4" stroke-width="1.600"/></svg>
  <svg class="abs" style="left:669px;top:689px" width="12" height="8" viewBox="0 0 12 8"><path d="M1 1L6 6.500 11 1" fill="none" stroke="#c4c4c4" stroke-width="1.600"/></svg>
  <div class="abs serif" style="left:407px;top:492px;font-size:12px;line-height:14px;letter-spacing:-0.3px">麦克风/Aux</div>
  <div class="abs mono" style="right:418px;top:492.5px">0.0 dB</div>
  <svg class="abs" style="left:0;top:0" width="1079" height="728" viewBox="0 0 1079 728">
    <!-- meter 1 -->
    <rect x="408" y="506" width="3" height="3" fill="#f4c542"/><rect x="408" y="510" width="3" height="3" fill="#f4c542"/>
    <rect x="412" y="506" width="167" height="3" fill="#3fc43f"/><rect x="412" y="510" width="167" height="3" fill="#3fc43f"/>
    <rect x="579" y="506" width="41" height="3" fill="#6b6a1c"/><rect x="579" y="510" width="41" height="3" fill="#6b6a1c"/>
    <rect x="619" y="506" width="3" height="3" fill="#f4c542"/><rect x="619" y="510" width="3" height="3" fill="#f4c542"/>
    <rect x="622" y="506" width="40" height="3" fill="#6e1818"/><rect x="622" y="510" width="40" height="3" fill="#6e1818"/>
    <rect x="483" y="506" width="3" height="3" fill="#000"/><rect x="483" y="510" width="3" height="3" fill="#000"/>
    <rect x="411.5" y="513" width="1" height="3" fill="#000"/><rect x="415.6" y="513" width="1" height="1.5" fill="#000"/><rect x="419.8" y="513" width="1" height="1.5" fill="#000"/><rect x="423.9" y="513" width="1" height="1.5" fill="#000"/><rect x="428.1" y="513" width="1" height="1.5" fill="#000"/><rect x="432.2" y="513" width="1" height="3" fill="#000"/><rect x="436.4" y="513" width="1" height="1.5" fill="#000"/><rect x="440.6" y="513" width="1" height="1.5" fill="#000"/><rect x="444.7" y="513" width="1" height="1.5" fill="#000"/><rect x="448.9" y="513" width="1" height="1.5" fill="#000"/><rect x="453.0" y="513" width="1" height="3" fill="#000"/><rect x="457.1" y="513" width="1" height="1.5" fill="#000"/><rect x="461.3" y="513" width="1" height="1.5" fill="#000"/><rect x="465.4" y="513" width="1" height="1.5" fill="#000"/><rect x="469.6" y="513" width="1" height="1.5" fill="#000"/><rect x="473.8" y="513" width="1" height="3" fill="#000"/><rect x="477.9" y="513" width="1" height="1.5" fill="#000"/><rect x="482.1" y="513" width="1" height="1.5" fill="#000"/><rect x="486.2" y="513" width="1" height="1.5" fill="#000"/><rect x="490.4" y="513" width="1" height="1.5" fill="#000"/><rect x="494.5" y="513" width="1" height="3" fill="#000"/><rect x="498.6" y="513" width="1" height="1.5" fill="#000"/><rect x="502.8" y="513" width="1" height="1.5" fill="#000"/><rect x="506.9" y="513" width="1" height="1.5" fill="#000"/><rect x="511.1" y="513" width="1" height="1.5" fill="#000"/><rect x="515.2" y="513" width="1" height="3" fill="#000"/><rect x="519.4" y="513" width="1" height="1.5" fill="#000"/><rect x="523.5" y="513" width="1" height="1.5" fill="#000"/><rect x="527.7" y="513" width="1" height="1.5" fill="#000"/><rect x="531.9" y="513" width="1" height="1.5" fill="#000"/><rect x="536.0" y="513" width="1" height="3" fill="#000"/><rect x="540.1" y="513" width="1" height="1.5" fill="#000"/><rect x="544.3" y="513" width="1" height="1.5" fill="#000"/><rect x="548.5" y="513" width="1" height="1.5" fill="#000"/><rect x="552.6" y="513" width="1" height="1.5" fill="#000"/><rect x="556.8" y="513" width="1" height="3" fill="#000"/><rect x="560.9" y="513" width="1" height="1.5" fill="#000"/><rect x="565.0" y="513" width="1" height="1.5" fill="#000"/><rect x="569.2" y="513" width="1" height="1.5" fill="#000"/><rect x="573.4" y="513" width="1" height="1.5" fill="#000"/><rect x="577.5" y="513" width="1" height="3" fill="#000"/><rect x="581.6" y="513" width="1" height="1.5" fill="#000"/><rect x="585.8" y="513" width="1" height="1.5" fill="#000"/><rect x="590.0" y="513" width="1" height="1.5" fill="#000"/><rect x="594.1" y="513" width="1" height="1.5" fill="#000"/><rect x="598.2" y="513" width="1" height="3" fill="#000"/><rect x="602.4" y="513" width="1" height="1.5" fill="#000"/><rect x="606.5" y="513" width="1" height="1.5" fill="#000"/><rect x="610.7" y="513" width="1" height="1.5" fill="#000"/><rect x="614.9" y="513" width="1" height="1.5" fill="#000"/><rect x="619.0" y="513" width="1" height="3" fill="#000"/><rect x="623.1" y="513" width="1" height="1.5" fill="#000"/><rect x="627.3" y="513" width="1" height="1.5" fill="#000"/><rect x="631.5" y="513" width="1" height="1.5" fill="#000"/><rect x="635.6" y="513" width="1" height="1.5" fill="#000"/><rect x="639.8" y="513" width="1" height="3" fill="#000"/><rect x="643.9" y="513" width="1" height="1.5" fill="#000"/><rect x="648.0" y="513" width="1" height="1.5" fill="#000"/><rect x="652.2" y="513" width="1" height="1.5" fill="#000"/><rect x="656.4" y="513" width="1" height="1.5" fill="#000"/><rect x="660.5" y="513" width="1" height="3" fill="#000"/>
    <g font-family="Liberation Sans,sans-serif" font-size="7" fill="#222" letter-spacing="-0.3"><text x="411.0" y="521.8" text-anchor="middle">-60</text><text x="431.8" y="521.8" text-anchor="middle">-55</text><text x="452.5" y="521.8" text-anchor="middle">-50</text><text x="473.2" y="521.8" text-anchor="middle">-45</text><text x="494.0" y="521.8" text-anchor="middle">-40</text><text x="514.8" y="521.8" text-anchor="middle">-35</text><text x="535.5" y="521.8" text-anchor="middle">-30</text><text x="556.2" y="521.8" text-anchor="middle">-25</text><text x="577.0" y="521.8" text-anchor="middle">-20</text><text x="597.8" y="521.8" text-anchor="middle">-15</text><text x="618.5" y="521.8" text-anchor="middle">-10</text><text x="639.2" y="521.8" text-anchor="middle">-5</text><text x="662.0" y="521.8" text-anchor="end">0</text></g>
    <!-- meter 2 -->
    <rect x="412" y="569" width="167" height="2.500" fill="#1f6b1f"/>
    <rect x="579" y="569" width="41" height="2.500" fill="#6b6a1c"/>
    <rect x="620" y="569" width="42" height="2.500" fill="#6e1818"/>
    <rect x="411.5" y="571.5" width="1" height="3" fill="#000"/><rect x="415.6" y="571.5" width="1" height="1.5" fill="#000"/><rect x="419.8" y="571.5" width="1" height="1.5" fill="#000"/><rect x="423.9" y="571.5" width="1" height="1.5" fill="#000"/><rect x="428.1" y="571.5" width="1" height="1.5" fill="#000"/><rect x="432.2" y="571.5" width="1" height="3" fill="#000"/><rect x="436.4" y="571.5" width="1" height="1.5" fill="#000"/><rect x="440.6" y="571.5" width="1" height="1.5" fill="#000"/><rect x="444.7" y="571.5" width="1" height="1.5" fill="#000"/><rect x="448.9" y="571.5" width="1" height="1.5" fill="#000"/><rect x="453.0" y="571.5" width="1" height="3" fill="#000"/><rect x="457.1" y="571.5" width="1" height="1.5" fill="#000"/><rect x="461.3" y="571.5" width="1" height="1.5" fill="#000"/><rect x="465.4" y="571.5" width="1" height="1.5" fill="#000"/><rect x="469.6" y="571.5" width="1" height="1.5" fill="#000"/><rect x="473.8" y="571.5" width="1" height="3" fill="#000"/><rect x="477.9" y="571.5" width="1" height="1.5" fill="#000"/><rect x="482.1" y="571.5" width="1" height="1.5" fill="#000"/><rect x="486.2" y="571.5" width="1" height="1.5" fill="#000"/><rect x="490.4" y="571.5" width="1" height="1.5" fill="#000"/><rect x="494.5" y="571.5" width="1" height="3" fill="#000"/><rect x="498.6" y="571.5" width="1" height="1.5" fill="#000"/><rect x="502.8" y="571.5" width="1" height="1.5" fill="#000"/><rect x="506.9" y="571.5" width="1" height="1.5" fill="#000"/><rect x="511.1" y="571.5" width="1" height="1.5" fill="#000"/><rect x="515.2" y="571.5" width="1" height="3" fill="#000"/><rect x="519.4" y="571.5" width="1" height="1.5" fill="#000"/><rect x="523.5" y="571.5" width="1" height="1.5" fill="#000"/><rect x="527.7" y="571.5" width="1" height="1.5" fill="#000"/><rect x="531.9" y="571.5" width="1" height="1.5" fill="#000"/><rect x="536.0" y="571.5" width="1" height="3" fill="#000"/><rect x="540.1" y="571.5" width="1" height="1.5" fill="#000"/><rect x="544.3" y="571.5" width="1" height="1.5" fill="#000"/><rect x="548.5" y="571.5" width="1" height="1.5" fill="#000"/><rect x="552.6" y="571.5" width="1" height="1.5" fill="#000"/><rect x="556.8" y="571.5" width="1" height="3" fill="#000"/><rect x="560.9" y="571.5" width="1" height="1.5" fill="#000"/><rect x="565.0" y="571.5" width="1" height="1.5" fill="#000"/><rect x="569.2" y="571.5" width="1" height="1.5" fill="#000"/><rect x="573.4" y="571.5" width="1" height="1.5" fill="#000"/><rect x="577.5" y="571.5" width="1" height="3" fill="#000"/><rect x="581.6" y="571.5" width="1" height="1.5" fill="#000"/><rect x="585.8" y="571.5" width="1" height="1.5" fill="#000"/><rect x="590.0" y="571.5" width="1" height="1.5" fill="#000"/><rect x="594.1" y="571.5" width="1" height="1.5" fill="#000"/><rect x="598.2" y="571.5" width="1" height="3" fill="#000"/><rect x="602.4" y="571.5" width="1" height="1.5" fill="#000"/><rect x="606.5" y="571.5" width="1" height="1.5" fill="#000"/><rect x="610.7" y="571.5" width="1" height="1.5" fill="#000"/><rect x="614.9" y="571.5" width="1" height="1.5" fill="#000"/><rect x="619.0" y="571.5" width="1" height="3" fill="#000"/><rect x="623.1" y="571.5" width="1" height="1.5" fill="#000"/><rect x="627.3" y="571.5" width="1" height="1.5" fill="#000"/><rect x="631.5" y="571.5" width="1" height="1.5" fill="#000"/><rect x="635.6" y="571.5" width="1" height="1.5" fill="#000"/><rect x="639.8" y="571.5" width="1" height="3" fill="#000"/><rect x="643.9" y="571.5" width="1" height="1.5" fill="#000"/><rect x="648.0" y="571.5" width="1" height="1.5" fill="#000"/><rect x="652.2" y="571.5" width="1" height="1.5" fill="#000"/><rect x="656.4" y="571.5" width="1" height="1.5" fill="#000"/><rect x="660.5" y="571.5" width="1" height="3" fill="#000"/>
    <g font-family="Liberation Sans,sans-serif" font-size="7" fill="#222" letter-spacing="-0.3"><text x="411.0" y="581" text-anchor="middle">-60</text><text x="431.8" y="581" text-anchor="middle">-55</text><text x="452.5" y="581" text-anchor="middle">-50</text><text x="473.2" y="581" text-anchor="middle">-45</text><text x="494.0" y="581" text-anchor="middle">-40</text><text x="514.8" y="581" text-anchor="middle">-35</text><text x="535.5" y="581" text-anchor="middle">-30</text><text x="556.2" y="581" text-anchor="middle">-25</text><text x="577.0" y="581" text-anchor="middle">-20</text><text x="597.8" y="581" text-anchor="middle">-15</text><text x="618.5" y="581" text-anchor="middle">-10</text><text x="639.2" y="581" text-anchor="middle">-5</text><text x="662.0" y="581" text-anchor="end">0</text></g>
  </svg>
  <div class="abs" style="left:408px;top:533px;width:197px;height:4px;background:#e7eaea;border:1px solid #d6d6d6"></div>
  <div class="abs" style="left:594px;top:525px;width:10px;height:21px;background:#0078d7"></div>
  <svg class="abs" style="left:611px;top:528px" width="23" height="17" viewBox="0 0 23 17"><path d="M0 5.500h4.500L11 .5v16L4.500 11.500H0z" fill="#000"/><path d="M13.800 5a4.500 4.500 0 0 1 0 7" fill="none" stroke="#000" stroke-width="1.800"/><path d="M17 1.800a8.500 8.500 0 0 1 0 13.400" fill="none" stroke="#000" stroke-width="1.900"/></svg><svg class="abs" style="left:643px;top:528px" width="16" height="16" viewBox="0 0 16 16" fill="#000"><path fill-rule="evenodd" d="M6.6 0h2.8l.4 2.1c.5.15.95.35 1.4.6l1.8-1.2 2 2-1.2 1.8c.25.45.45.9.6 1.4l2.1.4v2.8l-2.1.4c-.15.5-.35.95-.6 1.4l1.2 1.8-2 2-1.8-1.2c-.45.25-.9.45-1.4.6L9.400 16H6.600l-.4-2.1c-.5-.15-.95-.35-1.4-.6l-1.800 1.200-2-2 1.200-1.800c-.25-.45-.45-.9-.6-1.400L0 9.400V6.600l2.100-.4c.15-.5.35-.95.6-1.400L1.500 3l2-2 1.800 1.200c.45-.25.9-.45 1.400-.6zM8 4.800a3.200 3.200 0 1 0 0 6.400 3.200 3.200 0 0 0 0-6.400z"/></svg>
  <div class="abs serif" style="left:407px;top:554.5px;font-size:12px;line-height:14px">桌面音频</div>
  <div class="abs mono" style="right:418px;top:555.5px">-13.7 dB</div>
  <div class="abs" style="left:408px;top:592px;width:197px;height:4px;background:#e7eaea;border:1px solid #d6d6d6"></div>
  <div class="abs" style="left:516px;top:584px;width:10px;height:21px;background:#0078d7"></div>
  <svg class="abs" style="left:611px;top:587px" width="23" height="17" viewBox="0 0 23 17"><path d="M0 5.500h4.500L11 .5v16L4.500 11.500H0z" fill="#000"/><path d="M13.800 5a4.500 4.500 0 0 1 0 7" fill="none" stroke="#000" stroke-width="1.800"/><path d="M17 1.800a8.500 8.500 0 0 1 0 13.400" fill="none" stroke="#000" stroke-width="1.900"/></svg><svg class="abs" style="left:643px;top:587px" width="16" height="16" viewBox="0 0 16 16" fill="#000"><path fill-rule="evenodd" d="M6.6 0h2.8l.4 2.1c.5.15.95.35 1.4.6l1.8-1.2 2 2-1.2 1.8c.25.45.45.9.6 1.4l2.1.4v2.8l-2.1.4c-.15.5-.35.95-.6 1.4l1.2 1.8-2 2-1.8-1.2c-.45.25-.9.45-1.4.6L9.400 16H6.600l-.4-2.1c-.5-.15-.95-.35-1.4-.6l-1.800 1.200-2-2 1.200-1.800c-.25-.45-.45-.9-.6-1.400L0 9.400V6.600l2.100-.4c.15-.5.35-.95.6-1.400L1.500 3l2-2 1.800 1.200c.45-.25.9-.45 1.400-.6zM8 4.800a3.200 3.200 0 1 0 0 6.400 3.200 3.200 0 0 0 0-6.400z"/></svg>

  <div class="abs" style="left:692px;top:493px;width:160px;height:20px;background:#e1e1e1;border:1px solid #adadad"></div>
  <div class="abs" style="left:695.5px;top:497.5px;line-height:14px">渐变</div>
  <svg class="abs" style="left:838px;top:500px" width="10" height="7" viewBox="0 0 10 7"><path d="M.7 1L5 5.500 9.300 1" fill="none" stroke="#444" stroke-width="1.100"/></svg>
  <svg class="abs" style="left:859px;top:495px" width="16" height="16" viewBox="0 0 16 16" fill="#5a5a5a"><path fill-rule="evenodd" d="M6.6 0h2.8l.4 2.1c.5.15.95.35 1.4.6l1.8-1.2 2 2-1.2 1.8c.25.45.45.9.6 1.4l2.1.4v2.8l-2.1.4c-.15.5-.35.95-.6 1.4l1.2 1.8-2 2-1.8-1.2c-.45.25-.9.45-1.4.6L9.400 16H6.600l-.4-2.1c-.5-.15-.95-.35-1.4-.6l-1.800 1.200-2-2 1.200-1.800c-.25-.45-.45-.9-.6-1.400L0 9.400V6.600l2.100-.4c.15-.5.35-.95.6-1.400L1.500 3l2-2 1.800 1.200c.45-.25.9-.45 1.400-.6zM8 4.800a3.200 3.200 0 1 0 0 6.400 3.200 3.200 0 0 0 0-6.400z"/></svg>
  <div class="abs" style="left:690.5px;top:519px;line-height:14px">时长</div>
  <div class="abs" style="left:720px;top:516px;width:158px;height:18px;background:#fff;border:1px solid #7a7a7a"></div>
  <div class="abs mono" style="left:722px;top:519.5px">300 ms</div>
  <div class="abs" style="left:862px;top:518px;width:14px;height:14px;background:#f0f0f0;border-left:1px solid #d0d0d0"></div>
  <svg class="abs" style="left:865px;top:519px" width="9" height="13" viewBox="0 0 9 13"><path d="M1 5l3.500-3.500L8 5zM1 8l3.500 3.500L8 8z" fill="#222"/></svg>
<div class="btn" style="top:493px">开始推流</div>
<div class="btn" style="top:518px">开始录制</div>
<div class="btn" style="top:543px">启动虚拟摄像机</div>
<div class="btn" style="top:568px">工作室模式</div>
<div class="btn" style="top:593px">设置</div>
<div class="btn" style="top:618px">退出</div>

  
  <div class="abs" style="left:639px;top:706px;width:1px;height:22px;background:#d4d4d4"></div>
  <div class="abs" style="left:664px;top:706px;width:1px;height:22px;background:#d4d4d4"></div>
  <div class="abs" style="left:754px;top:706px;width:1px;height:22px;background:#d4d4d4"></div>
  <div class="abs" style="left:780px;top:706px;width:1px;height:22px;background:#d4d4d4"></div>
  <div class="abs" style="left:865px;top:706px;width:1px;height:22px;background:#d4d4d4"></div>
  <div class="abs" style="left:1010px;top:706px;width:1px;height:22px;background:#d4d4d4"></div>
  <div class="abs" style="left:1022px;top:706px;width:1px;height:22px;background:#d4d4d4"></div>
  <div class="abs" style="left:1059px;top:706px;width:1px;height:22px;background:#d4d4d4"></div>
  <svg class="abs" style="left:643px;top:710px" width="20" height="13" viewBox="0 0 20 13"><circle cx="10" cy="6.500" r="3.300" fill="#7d7d7d"/><path d="M5.500 2.300a5.800 5.800 0 0 0 0 8.400M14.500 2.300a5.800 5.800 0 0 1 0 8.400" fill="none" stroke="#7d7d7d" stroke-width="1.500"/><path d="M2.600 .5a8.300 8.300 0 0 0 0 12M17.400 .5a8.300 8.300 0 0 1 0 12" fill="none" stroke="#7d7d7d" stroke-width="1.500"/></svg>
  <div class="abs mono" style="left:668px;top:711.5px">LIVE: 00:00:00</div>
  <div class="abs" style="left:764px;top:712px;width:10px;height:10px;border-radius:50%;background:#9b9b9b"></div>
  <div class="abs mono" style="left:784px;top:711.5px">REC: 00:00:00</div>
  <div class="abs mono" style="left:888px;top:711.5px">CPU: 1.0%, 30.00 fps</div>
  <svg class="abs" style="left:1067px;top:718px" width="10" height="10" viewBox="0 0 10 10" fill="#b8b8b8"><rect x="7" y="1" width="2" height="2"/><rect x="4" y="4" width="2" height="2"/><rect x="7" y="4" width="2" height="2"/><rect x="1" y="7" width="2" height="2"/><rect x="4" y="7" width="2" height="2"/><rect x="7" y="7" width="2" height="2"/></svg>
  <div class="abs" style="left:0;top:728px;width:1080px;height:1px;background:#7d7d7d"></div><div class="abs" style="left:1079px;top:0;width:1px;height:729px;background:#8a8a8a"></div>

</div>
</body>
</html>
